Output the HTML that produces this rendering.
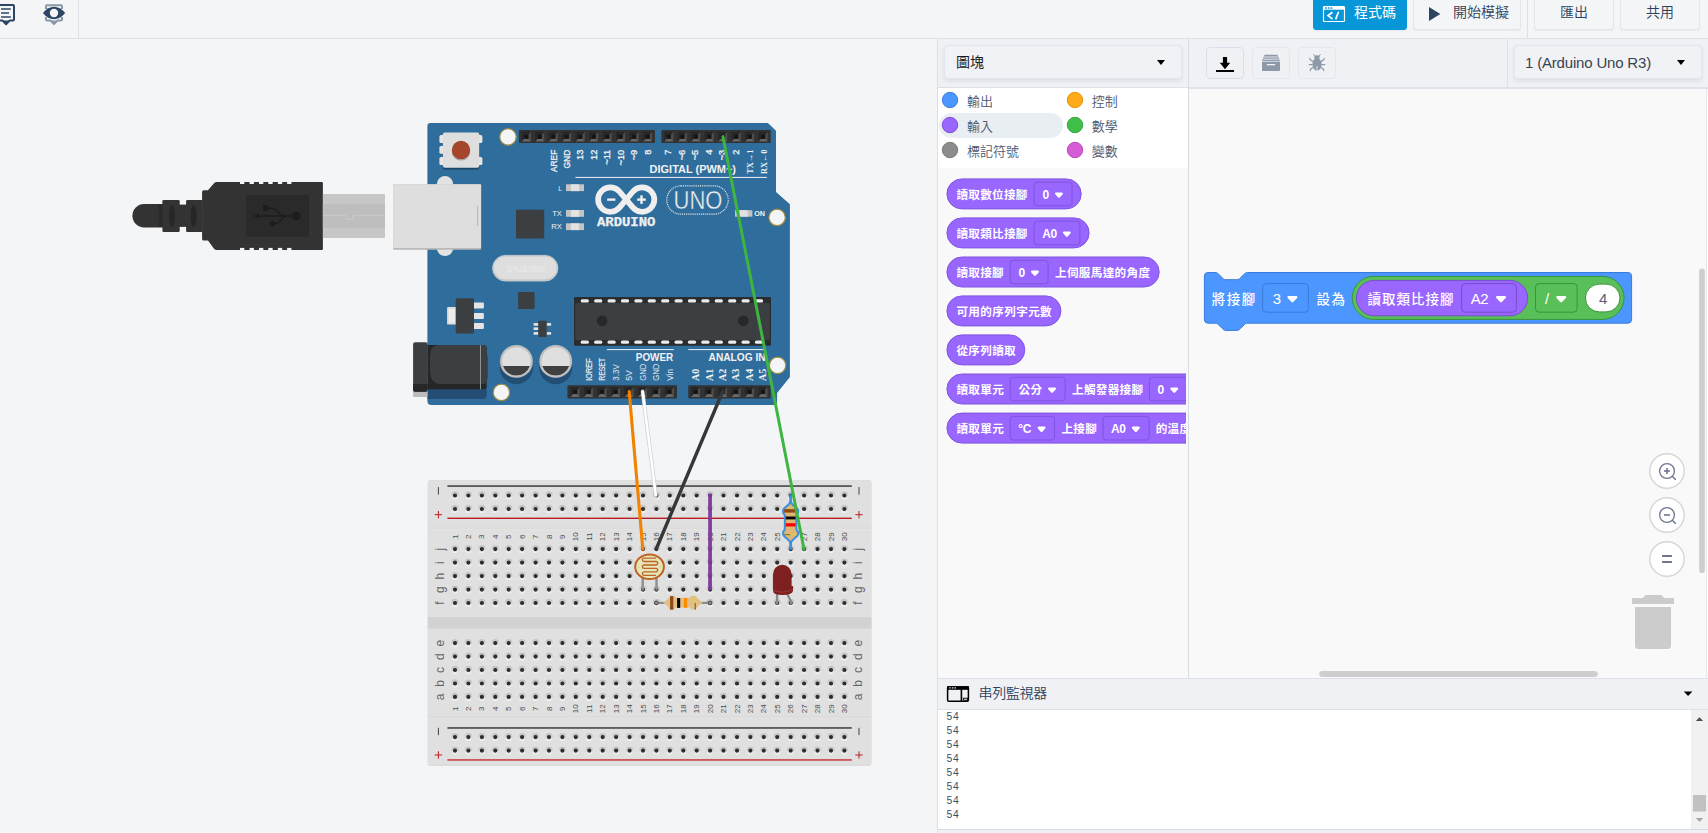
<!DOCTYPE html>
<html lang="zh-Hant">
<head>
<meta charset="utf-8">
<title>Tinkercad Circuits</title>
<style>
*{box-sizing:border-box;margin:0;padding:0}
html,body{width:1708px;height:833px;overflow:hidden}
body{position:relative;background:#f4f5f7;font-family:"Liberation Sans","Noto Sans CJK TC",sans-serif;color:#2c4059}
.abs{position:absolute}
#topbar{left:0;top:0;width:1708px;height:39px;border-bottom:1px solid #dde1e8;background:#f4f5f7}
.tbtn{position:absolute;top:-4px;height:34px;border:1px solid #e3e6ec;border-radius:3px;background:#f4f5f7;font-size:14px;font-weight:350;color:#2c4059;text-align:center;line-height:31px;box-shadow:0 1px 1px rgba(160,170,190,.15)}
.vdiv{position:absolute;width:1px;background:#dde1e8}
#codepanel{left:937px;top:39px;width:771px;height:794px;background:#f0f1f4;border-left:1px solid #d9dee8}
.sel{position:absolute;height:34px;border:1px solid #e1e5ed;border-radius:4px;background:#f1f2f5;box-shadow:0 2px 4px rgba(120,135,160,.18);font-size:14px;color:#1e2a3a}
.ibtn{position:absolute;top:47px;width:38px;height:32px;border:1px solid #e4e7ee;border-radius:4px;background:#f0f1f4}
.cat{position:absolute;font-size:12.5px;font-weight:300;color:#4c5a70;height:25px;line-height:25px;white-space:nowrap}
.cat i{position:absolute;left:-24px;top:4.5px;width:16px;height:16px;border-radius:50%;display:block}
.pb{position:absolute;left:9px;height:31px;border:1px solid #774dcb;background:#9966ff;border-radius:16px;color:#fff;font-size:12px;font-weight:500;line-height:29px;white-space:nowrap;padding-left:9px}
.pb .dd{display:inline-block;vertical-align:top;margin:3px 6px 0 6px;height:23px;line-height:21px;border:1px solid #774dcb;border-radius:4px;padding:0 7px;background:#9966ff}
.tri{display:inline-block;width:0;height:0;border-left:4px solid transparent;border-right:4px solid transparent;border-top:5px solid #fff;border-radius:2px;margin-left:5px;vertical-align:middle;position:relative;top:-1px}
.ddarrow{width:0;height:0;border-left:4.5px solid transparent;border-right:4.5px solid transparent;border-top:5px solid #000}
</style>
</head>
<body>
<!-- ============ TOP BAR ============ -->
<div id="topbar" class="abs">

  <svg class="abs" style="left:0;top:0" width="80" height="38" viewBox="0 0 80 38">
    <path d="M-4 5 H13 Q14 5 14 6 V19.6 Q14 20.6 13 20.6 H9.6 L6.1 24.2 L2.6 20.6 H-4" fill="none" stroke="#2c4562" stroke-width="2" stroke-linejoin="round"/>
    <path d="M1 9 H10.8 M1 13 H9 M1 17 H10.8" stroke="#2c4562" stroke-width="1.6" fill="none"/>
    <path d="M2.2 20.6 H10 L6.1 24.6 Z" fill="#2c4562"/><path d="M50.2 20.6 H57.8 L54 24.5 Z" fill="#8b98a9"/>
    <path d="M46 9 V6.2 Q46 5.2 47 5.2 H61 Q62 5.2 62 6.2 V9 M46 17 V19.6 Q46 20.6 47 20.6 H50.6 L54 24 L57.4 20.6 H61 Q62 20.6 62 19.6 V17" fill="none" stroke="#8b98a9" stroke-width="2" stroke-linejoin="round"/>
    <path d="M42.9 13 Q48 6.8 54 6.8 Q60 6.8 65.2 13 Q60 19.2 54 19.2 Q48 19.2 42.9 13 Z" fill="#2c4562"/>
    <circle cx="54" cy="13" r="4.2" fill="#f4f5f7"/>
  </svg>
  <div class="vdiv" style="left:78px;top:0;height:38px"></div>
  <div class="vdiv" style="left:1527px;top:0;height:38px"></div>
  <div class="tbtn" id="b-code" style="left:1313px;width:94px;background:#0796d8;border-color:#0796d8;color:#fff;font-weight:400;text-align:left;padding-left:40px">程式碼</div>
  <div class="tbtn" id="b-sim" style="left:1413px;width:108px;text-align:left;padding-left:39px">開始模擬</div>
  <div class="tbtn" id="b-exp" style="left:1534px;width:80px">匯出</div>
  <div class="tbtn" id="b-share" style="left:1620px;width:80px">共用</div>
  <svg class="abs" style="left:1322px;top:5px" width="24" height="18" viewBox="0 0 24 18">
    <rect x="1.5" y="1.5" width="21" height="15" rx="1" fill="none" stroke="#fff" stroke-width="1.2"/>
    <rect x="1.5" y="1.5" width="21" height="3.2" fill="#fff"/>
    <rect x="3.1" y="2.2" width="1.8" height="1.6" rx="0.4" fill="#0796d8"/><rect x="5.8" y="2.2" width="1.8" height="1.6" rx="0.4" fill="#0796d8"/><rect x="8.5" y="2.2" width="1.8" height="1.6" rx="0.4" fill="#0796d8"/>
    <path d="M10.5 7.2 L6 10.6 L10.5 14 M16.6 6.8 L13.6 14.4" fill="none" stroke="#fff" stroke-width="1.7"/>
  </svg>
  <svg class="abs" style="left:1428px;top:6px" width="14" height="16" viewBox="0 0 14 16">
    <path d="M1 1 L12.3 8 L1 15 Z" fill="#2c4562"/>
  </svg>
</div>

<!-- ============ CANVAS ============ -->
<svg id="circuit" class="abs" style="left:0;top:39px" width="937" height="794" viewBox="0 39 937 794">
<path d="M144.1 204 H163 V227.4 H144.1 A11.7 11.7 0 0 1 144.1 204 Z" fill="#333333"/>
<rect x="162.4" y="200" width="17.3" height="31.9" rx="1.2" fill="#333333"/>
<rect x="179" y="204.6" width="8" height="22.3" fill="#333333"/>
<rect x="186.1" y="200" width="16.5" height="31.9" rx="1.2" fill="#333333"/>
<ellipse cx="171.9" cy="216" rx="3" ry="11.3" fill="#262626"/><ellipse cx="193.6" cy="216" rx="3" ry="11.3" fill="#262626"/>
<path d="M158 205 Q161 216 158 227 H162.4 V205 Z" fill="#2a2a2a"/>
<path d="M203.6 190.3 H208 L214 183.2 Q215.2 181.9 217 181.9 H321.9 Q322.9 181.9 322.9 182.9 V249 Q322.9 250 321.9 250 H217 Q215.2 250 214 248.7 L208 240.4 H203.6 Q202.1 240.4 202.1 238.9 V191.8 Q202.1 190.3 203.6 190.3 Z" fill="#333333"/>
<rect x="240" y="181.4" width="4.3" height="2.6" fill="#f4f5f7"/><rect x="240" y="247.9" width="4.3" height="2.6" fill="#f4f5f7"/>
<rect x="249.6" y="181.4" width="4.3" height="2.6" fill="#f4f5f7"/><rect x="249.6" y="247.9" width="4.3" height="2.6" fill="#f4f5f7"/>
<rect x="259" y="181.4" width="4.3" height="2.6" fill="#f4f5f7"/><rect x="259" y="247.9" width="4.3" height="2.6" fill="#f4f5f7"/>
<rect x="268.3" y="181.4" width="4.3" height="2.6" fill="#f4f5f7"/><rect x="268.3" y="247.9" width="4.3" height="2.6" fill="#f4f5f7"/>
<rect x="277.9" y="181.4" width="4.3" height="2.6" fill="#f4f5f7"/><rect x="277.9" y="247.9" width="4.3" height="2.6" fill="#f4f5f7"/>
<rect x="287.1" y="181.4" width="4.3" height="2.6" fill="#f4f5f7"/><rect x="287.1" y="247.9" width="4.3" height="2.6" fill="#f4f5f7"/>
<rect x="246" y="195" width="63" height="41.7" fill="#2a2a2a"/>
<g fill="none" stroke="#1d1d1d" stroke-width="1.3"><path d="M256 216 H294"/><path d="M284.5 216 C279 216 278 208.2 271.5 208.2 H268"/><path d="M287 216 C282 216 281 223.6 275.5 223.6 H273"/></g>
<circle cx="296.4" cy="216" r="4.3" fill="#1d1d1d"/><circle cx="272.4" cy="223.6" r="2.7" fill="#1d1d1d"/><rect x="263" y="205.2" width="5.4" height="5.4" fill="#1d1d1d"/><path d="M253.3 216 L258.6 213.2 V218.8 Z" fill="#1d1d1d"/>
<path d="M322.9 194 H384 Q385 194 385 195 V236.9 Q385 237.9 384 237.9 H322.9 Z" fill="#c7c7c7"/>
<rect x="322.9" y="204" width="62.1" height="23.9" fill="#bebebe"/>
<path d="M322.9 215.4 H345.7 L346.8 219.3 H352.5 L353.6 215.4 H385" fill="none" stroke="#cbcbcb" stroke-width="1"/>
<path d="M430.4 123.1 H767.9 L776 130.7 V192.1 L789.9 204.3 V377.1 L777.1 392.9 V402.5 Q777.1 405 774.6 405 H431.4 Q427.4 405 427.4 401 V126.1 Q427.4 123.1 430.4 123.1 Z" fill="#2f6d9c"/>
<circle cx="445" cy="184.3" r="8.2" fill="#e3e3e3"/><circle cx="445" cy="247.9" r="8.2" fill="#e3e3e3"/>
<rect x="393.1" y="184.3" width="88" height="65.4" rx="1" fill="#b9b9b9"/>
<rect x="393.1" y="184.3" width="88" height="63.6" rx="1" fill="#dedede"/>
<rect x="477.1" y="205.7" width="1" height="20.3" fill="#b5b5b5"/>
<rect x="442.9" y="134.5" width="36.3" height="35" rx="2" fill="#1f4668"/>
<rect x="439.4" y="135.1" width="5" height="7.9" rx="1.6" fill="#e8e5e2"/>
<rect x="439.4" y="145.9" width="5" height="7.9" rx="1.6" fill="#e8e5e2"/>
<rect x="439.4" y="157.1" width="5" height="7.9" rx="1.6" fill="#e8e5e2"/>
<rect x="477.5" y="135.1" width="4.9" height="7.9" rx="1.6" fill="#e8e5e2"/>
<rect x="477.5" y="157.1" width="4.9" height="7.9" rx="1.6" fill="#e8e5e2"/>
<rect x="442.9" y="132.6" width="36.3" height="35.1" rx="2" fill="#dedede"/>
<circle cx="461" cy="151.4" r="9.2" fill="#a2a2a2"/><circle cx="461" cy="149.9" r="9.2" fill="#a4452c"/>
<circle cx="508" cy="136.9" r="8.25" fill="#f4f5f7" stroke="#9d8b42" stroke-width="1.2"/>
<circle cx="777.1" cy="217.4" r="8.25" fill="#f4f5f7" stroke="#9d8b42" stroke-width="1.2"/>
<circle cx="777.6" cy="365.3" r="8.25" fill="#f4f5f7" stroke="#9d8b42" stroke-width="1.2"/>
<circle cx="501.4" cy="392.4" r="8.25" fill="#f4f5f7" stroke="#9d8b42" stroke-width="1.2"/>
<rect x="519.0" y="130.0" width="136.0" height="13.1" rx="0.8" fill="#323232"/>
<path d="M521.80 131.80h9.20v9.80h-9.20zM535.26 131.80h9.20v9.80h-9.20zM548.73 131.80h9.20v9.80h-9.20zM562.19 131.80h9.20v9.80h-9.20zM575.66 131.80h9.20v9.80h-9.20zM589.12 131.80h9.20v9.80h-9.20zM602.59 131.80h9.20v9.80h-9.20zM616.05 131.80h9.20v9.80h-9.20zM629.52 131.80h9.20v9.80h-9.20zM642.99 131.80h9.20v9.80h-9.20z" fill="#272727"/>
<path d="M531.00 131.80L531.00 141.60L528.40 138.70L528.40 134.70zM544.47 131.80L544.47 141.60L541.87 138.70L541.87 134.70zM557.93 131.80L557.93 141.60L555.33 138.70L555.33 134.70zM571.39 131.80L571.39 141.60L568.79 138.70L568.79 134.70zM584.86 131.80L584.86 141.60L582.26 138.70L582.26 134.70zM598.33 131.80L598.33 141.60L595.73 138.70L595.73 134.70zM611.79 131.80L611.79 141.60L609.19 138.70L609.19 134.70zM625.25 131.80L625.25 141.60L622.65 138.70L622.65 134.70zM638.72 131.80L638.72 141.60L636.12 138.70L636.12 134.70zM652.19 131.80L652.19 141.60L649.59 138.70L649.59 134.70z" fill="#4e4e4e"/>
<path d="M521.80 141.60L531.00 141.60L528.40 138.70L524.40 138.70zM535.26 141.60L544.47 141.60L541.87 138.70L537.87 138.70zM548.73 141.60L557.93 141.60L555.33 138.70L551.33 138.70zM562.19 141.60L571.39 141.60L568.79 138.70L564.79 138.70zM575.66 141.60L584.86 141.60L582.26 138.70L578.26 138.70zM589.12 141.60L598.33 141.60L595.73 138.70L591.73 138.70zM602.59 141.60L611.79 141.60L609.19 138.70L605.19 138.70zM616.05 141.60L625.25 141.60L622.65 138.70L618.65 138.70zM629.52 141.60L638.72 141.60L636.12 138.70L632.12 138.70zM642.99 141.60L652.19 141.60L649.59 138.70L645.59 138.70z" fill="#676767"/>
<path d="M524.40 134.70h4.00v4.00h-4.00zM537.87 134.70h4.00v4.00h-4.00zM551.33 134.70h4.00v4.00h-4.00zM564.79 134.70h4.00v4.00h-4.00zM578.26 134.70h4.00v4.00h-4.00zM591.73 134.70h4.00v4.00h-4.00zM605.19 134.70h4.00v4.00h-4.00zM618.65 134.70h4.00v4.00h-4.00zM632.12 134.70h4.00v4.00h-4.00zM645.59 134.70h4.00v4.00h-4.00z" fill="#141414"/>
<rect x="661.4" y="130.0" width="109.3" height="13.1" rx="0.8" fill="#323232"/>
<path d="M664.30 131.80h9.20v9.80h-9.20zM677.76 131.80h9.20v9.80h-9.20zM691.23 131.80h9.20v9.80h-9.20zM704.69 131.80h9.20v9.80h-9.20zM718.16 131.80h9.20v9.80h-9.20zM731.62 131.80h9.20v9.80h-9.20zM745.09 131.80h9.20v9.80h-9.20zM758.55 131.80h9.20v9.80h-9.20z" fill="#272727"/>
<path d="M673.50 131.80L673.50 141.60L670.90 138.70L670.90 134.70zM686.97 131.80L686.97 141.60L684.37 138.70L684.37 134.70zM700.43 131.80L700.43 141.60L697.83 138.70L697.83 134.70zM713.89 131.80L713.89 141.60L711.29 138.70L711.29 134.70zM727.36 131.80L727.36 141.60L724.76 138.70L724.76 134.70zM740.83 131.80L740.83 141.60L738.23 138.70L738.23 134.70zM754.29 131.80L754.29 141.60L751.69 138.70L751.69 134.70zM767.75 131.80L767.75 141.60L765.15 138.70L765.15 134.70z" fill="#4e4e4e"/>
<path d="M664.30 141.60L673.50 141.60L670.90 138.70L666.90 138.70zM677.76 141.60L686.97 141.60L684.37 138.70L680.37 138.70zM691.23 141.60L700.43 141.60L697.83 138.70L693.83 138.70zM704.69 141.60L713.89 141.60L711.29 138.70L707.29 138.70zM718.16 141.60L727.36 141.60L724.76 138.70L720.76 138.70zM731.62 141.60L740.83 141.60L738.23 138.70L734.23 138.70zM745.09 141.60L754.29 141.60L751.69 138.70L747.69 138.70zM758.55 141.60L767.75 141.60L765.15 138.70L761.15 138.70z" fill="#676767"/>
<path d="M666.90 134.70h4.00v4.00h-4.00zM680.37 134.70h4.00v4.00h-4.00zM693.83 134.70h4.00v4.00h-4.00zM707.29 134.70h4.00v4.00h-4.00zM720.76 134.70h4.00v4.00h-4.00zM734.23 134.70h4.00v4.00h-4.00zM747.69 134.70h4.00v4.00h-4.00zM761.15 134.70h4.00v4.00h-4.00z" fill="#141414"/>
<rect x="567.4" y="385.3" width="109.6" height="13.1" rx="0.8" fill="#323232"/>
<path d="M570.60 387.10h9.20v9.80h-9.20zM584.07 387.10h9.20v9.80h-9.20zM597.53 387.10h9.20v9.80h-9.20zM611.00 387.10h9.20v9.80h-9.20zM624.46 387.10h9.20v9.80h-9.20zM637.93 387.10h9.20v9.80h-9.20zM651.39 387.10h9.20v9.80h-9.20zM664.86 387.10h9.20v9.80h-9.20z" fill="#272727"/>
<path d="M579.80 387.10L579.80 396.90L577.20 394.00L577.20 390.00zM593.27 387.10L593.27 396.90L590.67 394.00L590.67 390.00zM606.73 387.10L606.73 396.90L604.13 394.00L604.13 390.00zM620.20 387.10L620.20 396.90L617.60 394.00L617.60 390.00zM633.66 387.10L633.66 396.90L631.06 394.00L631.06 390.00zM647.13 387.10L647.13 396.90L644.53 394.00L644.53 390.00zM660.59 387.10L660.59 396.90L657.99 394.00L657.99 390.00zM674.06 387.10L674.06 396.90L671.46 394.00L671.46 390.00z" fill="#4e4e4e"/>
<path d="M570.60 396.90L579.80 396.90L577.20 394.00L573.20 394.00zM584.07 396.90L593.27 396.90L590.67 394.00L586.67 394.00zM597.53 396.90L606.73 396.90L604.13 394.00L600.13 394.00zM611.00 396.90L620.20 396.90L617.60 394.00L613.60 394.00zM624.46 396.90L633.66 396.90L631.06 394.00L627.06 394.00zM637.93 396.90L647.13 396.90L644.53 394.00L640.53 394.00zM651.39 396.90L660.59 396.90L657.99 394.00L653.99 394.00zM664.86 396.90L674.06 396.90L671.46 394.00L667.46 394.00z" fill="#676767"/>
<path d="M573.20 390.00h4.00v4.00h-4.00zM586.67 390.00h4.00v4.00h-4.00zM600.13 390.00h4.00v4.00h-4.00zM613.60 390.00h4.00v4.00h-4.00zM627.06 390.00h4.00v4.00h-4.00zM640.53 390.00h4.00v4.00h-4.00zM653.99 390.00h4.00v4.00h-4.00zM667.46 390.00h4.00v4.00h-4.00z" fill="#141414"/>
<rect x="688.3" y="385.3" width="82.4" height="13.1" rx="0.8" fill="#323232"/>
<path d="M691.10 387.10h9.20v9.80h-9.20zM704.57 387.10h9.20v9.80h-9.20zM718.03 387.10h9.20v9.80h-9.20zM731.50 387.10h9.20v9.80h-9.20zM744.96 387.10h9.20v9.80h-9.20zM758.43 387.10h9.20v9.80h-9.20z" fill="#272727"/>
<path d="M700.30 387.10L700.30 396.90L697.70 394.00L697.70 390.00zM713.77 387.10L713.77 396.90L711.17 394.00L711.17 390.00zM727.23 387.10L727.23 396.90L724.63 394.00L724.63 390.00zM740.70 387.10L740.70 396.90L738.10 394.00L738.10 390.00zM754.16 387.10L754.16 396.90L751.56 394.00L751.56 390.00zM767.63 387.10L767.63 396.90L765.03 394.00L765.03 390.00z" fill="#4e4e4e"/>
<path d="M691.10 396.90L700.30 396.90L697.70 394.00L693.70 394.00zM704.57 396.90L713.77 396.90L711.17 394.00L707.17 394.00zM718.03 396.90L727.23 396.90L724.63 394.00L720.63 394.00zM731.50 396.90L740.70 396.90L738.10 394.00L734.10 394.00zM744.96 396.90L754.16 396.90L751.56 394.00L747.56 394.00zM758.43 396.90L767.63 396.90L765.03 394.00L761.03 394.00z" fill="#676767"/>
<path d="M693.70 390.00h4.00v4.00h-4.00zM707.17 390.00h4.00v4.00h-4.00zM720.63 390.00h4.00v4.00h-4.00zM734.10 390.00h4.00v4.00h-4.00zM747.56 390.00h4.00v4.00h-4.00zM761.03 390.00h4.00v4.00h-4.00z" fill="#141414"/>
<g font-family="'Liberation Sans',sans-serif">
<text transform="translate(556.5 149.7) rotate(-90)" font-size="9.3" font-weight="400" text-anchor="end" fill="#f2f2f2" stroke="#f2f2f2" stroke-width="0.3" textLength="22.4" lengthAdjust="spacingAndGlyphs">AREF</text>
<text transform="translate(569.7 149.7) rotate(-90)" font-size="9.3" font-weight="400" text-anchor="end" fill="#f2f2f2" stroke="#f2f2f2" stroke-width="0.3" textLength="18.9" lengthAdjust="spacingAndGlyphs">GND</text>
<text transform="translate(583.2 149.7) rotate(-90)" font-size="9.3" font-weight="400" text-anchor="end" fill="#f2f2f2" stroke="#f2f2f2" stroke-width="0.3">13</text>
<text transform="translate(596.7 149.7) rotate(-90)" font-size="9.3" font-weight="400" text-anchor="end" fill="#f2f2f2" stroke="#f2f2f2" stroke-width="0.3">12</text>
<text transform="translate(610.1 149.7) rotate(-90)" font-size="9.3" font-weight="400" text-anchor="end" fill="#f2f2f2" stroke="#f2f2f2" stroke-width="0.3">~11</text>
<text transform="translate(623.6 149.7) rotate(-90)" font-size="9.3" font-weight="400" text-anchor="end" fill="#f2f2f2" stroke="#f2f2f2" stroke-width="0.3">~10</text>
<text transform="translate(637.1 149.7) rotate(-90)" font-size="9.3" font-weight="400" text-anchor="end" fill="#f2f2f2" stroke="#f2f2f2" stroke-width="0.3">~9</text>
<text transform="translate(650.5 149.7) rotate(-90)" font-size="9.3" font-weight="400" text-anchor="end" fill="#f2f2f2" stroke="#f2f2f2" stroke-width="0.3">8</text>
<text transform="translate(671.2 149.7) rotate(-90)" font-size="9.3" font-weight="400" text-anchor="end" fill="#f2f2f2" stroke="#f2f2f2" stroke-width="0.3">7</text>
<text transform="translate(684.7 149.7) rotate(-90)" font-size="9.3" font-weight="400" text-anchor="end" fill="#f2f2f2" stroke="#f2f2f2" stroke-width="0.3">~6</text>
<text transform="translate(698.1 149.7) rotate(-90)" font-size="9.3" font-weight="400" text-anchor="end" fill="#f2f2f2" stroke="#f2f2f2" stroke-width="0.3">~5</text>
<text transform="translate(711.6 149.7) rotate(-90)" font-size="9.3" font-weight="400" text-anchor="end" fill="#f2f2f2" stroke="#f2f2f2" stroke-width="0.3">4</text>
<text transform="translate(725.1 149.7) rotate(-90)" font-size="9.3" font-weight="400" text-anchor="end" fill="#f2f2f2" stroke="#f2f2f2" stroke-width="0.3">~3</text>
<text transform="translate(738.5 149.7) rotate(-90)" font-size="9.3" font-weight="400" text-anchor="end" fill="#f2f2f2" stroke="#f2f2f2" stroke-width="0.3">2</text>
<text transform="translate(753.3 149.5) rotate(-90)" font-size="9.2" font-weight="700" text-anchor="end" fill="#f2f2f2" font-family="'Liberation Serif',serif" textLength="24.4" lengthAdjust="spacingAndGlyphs">TX→1</text>
<text transform="translate(766.8 149.5) rotate(-90)" font-size="9.2" font-weight="700" text-anchor="end" fill="#f2f2f2" font-family="'Liberation Serif',serif" textLength="24.4" lengthAdjust="spacingAndGlyphs">RX←0</text>
<text x="649.6" y="173.2" font-size="10.4" font-weight="700" fill="#f2f2f2" textLength="86.4" lengthAdjust="spacingAndGlyphs">DIGITAL (PWM~)</text>
<rect x="575.4" y="176.9" width="191.5" height="1" fill="#f2f2f2"/>
<rect x="566" y="184.3" width="18" height="6.8" fill="#c4c4c4"/><rect x="570.9" y="184.3" width="8.3" height="6.8" fill="#e2e2e2"/>
<rect x="566" y="210" width="18" height="6.8" fill="#c4c4c4"/><rect x="570.9" y="210" width="8.3" height="6.8" fill="#e2e2e2"/>
<rect x="566" y="223.3" width="18" height="6.8" fill="#c4c4c4"/><rect x="570.9" y="223.3" width="8.3" height="6.8" fill="#e2e2e2"/>
<rect x="735" y="210.2" width="17.4" height="6.5" fill="#c4c4c4"/><rect x="739.7" y="210.2" width="8.0" height="6.5" fill="#e2e2e2"/>
<text x="561.9" y="190.5" font-size="6.6" font-weight="400" fill="#f2f2f2" text-anchor="end">L</text>
<text x="561.9" y="216.2" font-size="7.6" font-weight="400" fill="#f2f2f2" text-anchor="end">TX</text>
<text x="561.9" y="229.3" font-size="7.6" font-weight="400" fill="#f2f2f2" text-anchor="end">RX</text>
<text x="754.2" y="216.2" font-size="7.5" font-weight="700" fill="#f2f2f2" textLength="10.8" lengthAdjust="spacingAndGlyphs">ON</text>
<rect x="516" y="209.7" width="28.2" height="28.9" rx="0.8" fill="#3b3f42"/>
<path d="M619.66 191.78 A12.2 12.2 0 1 0 619.66 207.42 L632.74 191.78 A12.2 12.2 0 1 1 632.74 207.42 Z" fill="none" stroke="#efefef" stroke-width="5.7" stroke-linejoin="round"/>
<rect x="607.2" y="198.4" width="8.2" height="2.4" fill="#efefef"/><rect x="637.2" y="198.4" width="8.6" height="2.4" fill="#efefef"/><rect x="640.3" y="195.3" width="2.4" height="8.6" fill="#efefef"/>
<text x="597" y="226.4" font-size="12.2" font-weight="700" stroke="#efefef" stroke-width="0.25" fill="#efefef" font-family="'Liberation Mono',monospace" textLength="58.4" lengthAdjust="spacingAndGlyphs">ARDUINO</text>
<rect x="666.8" y="185.8" width="61.4" height="28.4" rx="14.2" fill="none" stroke="#efefef" stroke-width="1.2" stroke-dasharray="1 0.9"/>
<text x="698" y="209.2" font-size="25.6" fill="#efefef" stroke="#2f6d9c" stroke-width="0.4" text-anchor="middle" textLength="49" lengthAdjust="spacingAndGlyphs">UNO</text>
<rect x="492.6" y="255.4" width="65.3" height="25.6" rx="12.8" fill="#c2c2c2" stroke="#d6d6d6" stroke-width="0.8"/>
<rect x="493.8" y="256.4" width="62.9" height="23" rx="11.5" fill="#dedede"/>
<text x="525.6" y="271.8" font-size="9.6" fill="#ececec" text-anchor="middle" textLength="39.2" lengthAdjust="spacingAndGlyphs">SPK16.000G</text>
<rect x="518.1" y="292.1" width="16.5" height="16.9" rx="0.6" fill="#3b3f42"/>
<rect x="447.1" y="307.1" width="9.5" height="17.5" rx="1.2" fill="#e0e0e0"/><rect x="449" y="309" width="6" height="13.6" fill="#ededed"/>
<rect x="473" y="302.6" width="10.9" height="6" rx="0.8" fill="#e4e4e4"/>
<rect x="473" y="312.9" width="10.9" height="6" rx="0.8" fill="#e4e4e4"/>
<rect x="473" y="322.9" width="10.9" height="6" rx="0.8" fill="#e4e4e4"/>
<rect x="455.7" y="298.3" width="18.3" height="35.3" rx="1" fill="#3b3f42"/>
<rect x="533.6" y="323.1" width="5" height="2.6" fill="#e4e4e4"/>
<rect x="533.6" y="327.4" width="5" height="2.6" fill="#e4e4e4"/>
<rect x="533.6" y="332.1" width="5" height="2.6" fill="#e4e4e4"/>
<rect x="546.4" y="323.1" width="4.7" height="2.6" fill="#e4e4e4"/>
<rect x="546.4" y="332.1" width="4.7" height="2.6" fill="#e4e4e4"/>
<rect x="538.3" y="320.7" width="8.4" height="16.2" rx="0.6" fill="#3b3f42"/>
<rect x="574" y="297.1" width="197" height="48.6" rx="1.4" fill="#2a2c2e"/>
<rect x="575.2" y="302.9" width="194.6" height="37.2" rx="1.6" fill="#3b3f42"/>
<rect x="580.7" y="299.2" width="8.2" height="3.2" rx="1.5" fill="#ebebeb"/><rect x="580.7" y="340.6" width="8.2" height="3.2" rx="1.5" fill="#ebebeb"/>
<rect x="594.1" y="299.2" width="8.2" height="3.2" rx="1.5" fill="#ebebeb"/><rect x="594.1" y="340.6" width="8.2" height="3.2" rx="1.5" fill="#ebebeb"/>
<rect x="607.5" y="299.2" width="8.2" height="3.2" rx="1.5" fill="#ebebeb"/><rect x="607.5" y="340.6" width="8.2" height="3.2" rx="1.5" fill="#ebebeb"/>
<rect x="620.9" y="299.2" width="8.2" height="3.2" rx="1.5" fill="#ebebeb"/><rect x="620.9" y="340.6" width="8.2" height="3.2" rx="1.5" fill="#ebebeb"/>
<rect x="634.3" y="299.2" width="8.2" height="3.2" rx="1.5" fill="#ebebeb"/><rect x="634.3" y="340.6" width="8.2" height="3.2" rx="1.5" fill="#ebebeb"/>
<rect x="647.7" y="299.2" width="8.2" height="3.2" rx="1.5" fill="#ebebeb"/><rect x="647.7" y="340.6" width="8.2" height="3.2" rx="1.5" fill="#ebebeb"/>
<rect x="661.1" y="299.2" width="8.2" height="3.2" rx="1.5" fill="#ebebeb"/><rect x="661.1" y="340.6" width="8.2" height="3.2" rx="1.5" fill="#ebebeb"/>
<rect x="674.5" y="299.2" width="8.2" height="3.2" rx="1.5" fill="#ebebeb"/><rect x="674.5" y="340.6" width="8.2" height="3.2" rx="1.5" fill="#ebebeb"/>
<rect x="687.9" y="299.2" width="8.2" height="3.2" rx="1.5" fill="#ebebeb"/><rect x="687.9" y="340.6" width="8.2" height="3.2" rx="1.5" fill="#ebebeb"/>
<rect x="701.3" y="299.2" width="8.2" height="3.2" rx="1.5" fill="#ebebeb"/><rect x="701.3" y="340.6" width="8.2" height="3.2" rx="1.5" fill="#ebebeb"/>
<rect x="714.7" y="299.2" width="8.2" height="3.2" rx="1.5" fill="#ebebeb"/><rect x="714.7" y="340.6" width="8.2" height="3.2" rx="1.5" fill="#ebebeb"/>
<rect x="728.1" y="299.2" width="8.2" height="3.2" rx="1.5" fill="#ebebeb"/><rect x="728.1" y="340.6" width="8.2" height="3.2" rx="1.5" fill="#ebebeb"/>
<rect x="741.5" y="299.2" width="8.2" height="3.2" rx="1.5" fill="#ebebeb"/><rect x="741.5" y="340.6" width="8.2" height="3.2" rx="1.5" fill="#ebebeb"/>
<rect x="754.9" y="299.2" width="8.2" height="3.2" rx="1.5" fill="#ebebeb"/><rect x="754.9" y="340.6" width="8.2" height="3.2" rx="1.5" fill="#ebebeb"/>
<circle cx="602.1" cy="320.7" r="5.3" fill="#26282a"/><circle cx="743.3" cy="320.7" r="5.3" fill="#26282a"/>
<rect x="606.9" y="349.1" width="67" height="1" fill="#f2f2f2"/><rect x="688.3" y="349.1" width="76.5" height="1" fill="#f2f2f2"/>
<text x="673.2" y="360.6" font-size="10.6" font-weight="700" fill="#f2f2f2" text-anchor="end" textLength="37.4" lengthAdjust="spacingAndGlyphs">POWER</text>
<text x="708.6" y="360.6" font-size="10.6" font-weight="700" fill="#f2f2f2" textLength="57" lengthAdjust="spacingAndGlyphs">ANALOG IN</text>
<text transform="translate(591.8 380.7) rotate(-90)" font-size="8.6" font-weight="400" text-anchor="start" fill="#f2f2f2" stroke="#f2f2f2" stroke-width="0.15" textLength="22.3" lengthAdjust="spacingAndGlyphs">IOREF</text>
<text transform="translate(605.3 380.7) rotate(-90)" font-size="8.6" font-weight="400" text-anchor="start" fill="#f2f2f2" stroke="#f2f2f2" stroke-width="0.15" textLength="22.6" lengthAdjust="spacingAndGlyphs">RESET</text>
<text transform="translate(618.7 380.7) rotate(-90)" font-size="8.6" font-weight="400" text-anchor="start" fill="#e4e9ee" textLength="16.4" lengthAdjust="spacingAndGlyphs">3.3V</text>
<text transform="translate(632.2 380.7) rotate(-90)" font-size="8.6" font-weight="400" text-anchor="start" fill="#e4e9ee">5V</text>
<text transform="translate(645.7 380.7) rotate(-90)" font-size="8.6" font-weight="400" text-anchor="start" fill="#e4e9ee" textLength="17.0" lengthAdjust="spacingAndGlyphs">GND</text>
<text transform="translate(659.1 380.7) rotate(-90)" font-size="8.6" font-weight="400" text-anchor="start" fill="#e4e9ee" textLength="17.0" lengthAdjust="spacingAndGlyphs">GND</text>
<text transform="translate(672.6 380.7) rotate(-90)" font-size="8.6" font-weight="400" text-anchor="start" fill="#e4e9ee" textLength="11.8" lengthAdjust="spacingAndGlyphs">Vin</text>
<text transform="translate(699.0 381.0) rotate(-90)" font-size="9.6" font-weight="700" text-anchor="start" fill="#f2f2f2" font-family="'Liberation Serif',serif" textLength="12.2" lengthAdjust="spacingAndGlyphs">A0</text>
<text transform="translate(712.5 381.0) rotate(-90)" font-size="9.6" font-weight="700" text-anchor="start" fill="#f2f2f2" font-family="'Liberation Serif',serif" textLength="12.2" lengthAdjust="spacingAndGlyphs">A1</text>
<text transform="translate(725.9 381.0) rotate(-90)" font-size="9.6" font-weight="700" text-anchor="start" fill="#f2f2f2" font-family="'Liberation Serif',serif" textLength="12.2" lengthAdjust="spacingAndGlyphs">A2</text>
<text transform="translate(739.4 381.0) rotate(-90)" font-size="9.6" font-weight="700" text-anchor="start" fill="#f2f2f2" font-family="'Liberation Serif',serif" textLength="12.2" lengthAdjust="spacingAndGlyphs">A3</text>
<text transform="translate(752.9 381.0) rotate(-90)" font-size="9.6" font-weight="700" text-anchor="start" fill="#f2f2f2" font-family="'Liberation Serif',serif" textLength="12.2" lengthAdjust="spacingAndGlyphs">A4</text>
<text transform="translate(766.3 381.0) rotate(-90)" font-size="9.6" font-weight="700" text-anchor="start" fill="#f2f2f2" font-family="'Liberation Serif',serif" textLength="12.2" lengthAdjust="spacingAndGlyphs">A5</text>
</g>
<circle cx="516.4" cy="367.6" r="16.6" fill="#234f75"/>
<circle cx="516.4" cy="361.4" r="16.4" fill="#c1c1c1"/><circle cx="516.4" cy="361.4" r="14.2" fill="#dfdfdf"/>
<path d="M502.97 366 A14.2 14.2 0 0 0 529.83 366 Z" fill="#404040"/>
<circle cx="555.7" cy="367.6" r="16.6" fill="#234f75"/>
<circle cx="555.7" cy="361.4" r="16.4" fill="#c1c1c1"/><circle cx="555.7" cy="361.4" r="14.2" fill="#dfdfdf"/>
<path d="M542.27 366 A14.2 14.2 0 0 0 569.13 366 Z" fill="#404040"/>
<path d="M427.5 386 H486.7 V395 Q486.7 399 482.7 399 H427.5 Z" fill="#234d72"/>
<rect x="413.1" y="388" width="14.4" height="9.1" rx="1.2" fill="#bcbcbc"/>
<rect x="413.1" y="342.2" width="14.5" height="49.5" rx="2" fill="#3b3f42"/>
<path d="M413.1 384.1 H427.6 V389.7 Q427.6 391.7 425.6 391.7 H415.1 Q413.1 391.7 413.1 389.7 Z" fill="#26282a"/>
<path d="M427.5 345.1 H483.2 Q486.7 345.1 486.7 348.6 V385.8 Q486.7 389.3 483.2 389.3 H427.5 Z" fill="#242628"/>
<path d="M439 345.1 H483.2 Q486.7 345.1 486.7 348.6 V380.5 Q486.7 384 483.2 384 H441 Q430 384 430 370 V356 Q430 345.1 439 345.1 Z" fill="#3b3f42"/>
<rect x="486.2" y="355.3" width="1.6" height="23.4" rx="0.6" fill="#3b3f42"/>
<rect x="480" y="345.1" width="0.9" height="44.2" fill="#9a9c9e"/>
<rect x="427.8" y="480.3" width="443.6" height="285.4" rx="2.2" fill="#d3d3d3"/>
<rect x="427.8" y="480.3" width="443.6" height="284.5" rx="2.2" fill="#e0e0e0"/>
<rect x="427.8" y="527.7" width="443.6" height="1" fill="#d6d6d6"/><rect x="427.8" y="528.7" width="443.6" height="1" fill="#e4e4e4"/>
<rect x="427.8" y="716.6" width="443.6" height="1" fill="#d6d6d6"/><rect x="427.8" y="717.6" width="443.6" height="1" fill="#e4e4e4"/>
<rect x="427.8" y="617.2" width="443.6" height="11.3" fill="#d2d2d2"/>
<rect x="447.4" y="485.3" width="404.4" height="1.5" fill="#3c3c3c"/><rect x="447.4" y="517.6" width="404.4" height="1.4" fill="#bb1e22"/>
<rect x="447.4" y="727.2" width="404.4" height="1.5" fill="#3c3c3c"/><rect x="447.4" y="759.2" width="404.4" height="1.5" fill="#c8393f"/>
<linearGradient id="hg" x1="0" y1="0" x2="0" y2="1"><stop offset="0" stop-color="#bdbdbd"/><stop offset="0.45" stop-color="#d2d2d2"/><stop offset="1" stop-color="#f4f4f4"/></linearGradient>
<path d="M451.1 495.5a3.9 3.9 0 1 0 7.8 0a3.9 3.9 0 1 0 -7.8 0M464.5 495.5a3.9 3.9 0 1 0 7.8 0a3.9 3.9 0 1 0 -7.8 0M478.0 495.5a3.9 3.9 0 1 0 7.8 0a3.9 3.9 0 1 0 -7.8 0M491.4 495.5a3.9 3.9 0 1 0 7.8 0a3.9 3.9 0 1 0 -7.8 0M504.8 495.5a3.9 3.9 0 1 0 7.8 0a3.9 3.9 0 1 0 -7.8 0M518.2 495.5a3.9 3.9 0 1 0 7.8 0a3.9 3.9 0 1 0 -7.8 0M531.7 495.5a3.9 3.9 0 1 0 7.8 0a3.9 3.9 0 1 0 -7.8 0M545.1 495.5a3.9 3.9 0 1 0 7.8 0a3.9 3.9 0 1 0 -7.8 0M558.5 495.5a3.9 3.9 0 1 0 7.8 0a3.9 3.9 0 1 0 -7.8 0M571.9 495.5a3.9 3.9 0 1 0 7.8 0a3.9 3.9 0 1 0 -7.8 0M585.4 495.5a3.9 3.9 0 1 0 7.8 0a3.9 3.9 0 1 0 -7.8 0M598.8 495.5a3.9 3.9 0 1 0 7.8 0a3.9 3.9 0 1 0 -7.8 0M612.2 495.5a3.9 3.9 0 1 0 7.8 0a3.9 3.9 0 1 0 -7.8 0M625.7 495.5a3.9 3.9 0 1 0 7.8 0a3.9 3.9 0 1 0 -7.8 0M639.1 495.5a3.9 3.9 0 1 0 7.8 0a3.9 3.9 0 1 0 -7.8 0M652.5 495.5a3.9 3.9 0 1 0 7.8 0a3.9 3.9 0 1 0 -7.8 0M665.9 495.5a3.9 3.9 0 1 0 7.8 0a3.9 3.9 0 1 0 -7.8 0M679.4 495.5a3.9 3.9 0 1 0 7.8 0a3.9 3.9 0 1 0 -7.8 0M692.8 495.5a3.9 3.9 0 1 0 7.8 0a3.9 3.9 0 1 0 -7.8 0M706.2 495.5a3.9 3.9 0 1 0 7.8 0a3.9 3.9 0 1 0 -7.8 0M719.6 495.5a3.9 3.9 0 1 0 7.8 0a3.9 3.9 0 1 0 -7.8 0M733.1 495.5a3.9 3.9 0 1 0 7.8 0a3.9 3.9 0 1 0 -7.8 0M746.5 495.5a3.9 3.9 0 1 0 7.8 0a3.9 3.9 0 1 0 -7.8 0M759.9 495.5a3.9 3.9 0 1 0 7.8 0a3.9 3.9 0 1 0 -7.8 0M773.3 495.5a3.9 3.9 0 1 0 7.8 0a3.9 3.9 0 1 0 -7.8 0M786.8 495.5a3.9 3.9 0 1 0 7.8 0a3.9 3.9 0 1 0 -7.8 0M800.2 495.5a3.9 3.9 0 1 0 7.8 0a3.9 3.9 0 1 0 -7.8 0M813.6 495.5a3.9 3.9 0 1 0 7.8 0a3.9 3.9 0 1 0 -7.8 0M827.1 495.5a3.9 3.9 0 1 0 7.8 0a3.9 3.9 0 1 0 -7.8 0M840.5 495.5a3.9 3.9 0 1 0 7.8 0a3.9 3.9 0 1 0 -7.8 0" fill="url(#hg)"/>
<path d="M451.1 509.0a3.9 3.9 0 1 0 7.8 0a3.9 3.9 0 1 0 -7.8 0M464.5 509.0a3.9 3.9 0 1 0 7.8 0a3.9 3.9 0 1 0 -7.8 0M478.0 509.0a3.9 3.9 0 1 0 7.8 0a3.9 3.9 0 1 0 -7.8 0M491.4 509.0a3.9 3.9 0 1 0 7.8 0a3.9 3.9 0 1 0 -7.8 0M504.8 509.0a3.9 3.9 0 1 0 7.8 0a3.9 3.9 0 1 0 -7.8 0M518.2 509.0a3.9 3.9 0 1 0 7.8 0a3.9 3.9 0 1 0 -7.8 0M531.7 509.0a3.9 3.9 0 1 0 7.8 0a3.9 3.9 0 1 0 -7.8 0M545.1 509.0a3.9 3.9 0 1 0 7.8 0a3.9 3.9 0 1 0 -7.8 0M558.5 509.0a3.9 3.9 0 1 0 7.8 0a3.9 3.9 0 1 0 -7.8 0M571.9 509.0a3.9 3.9 0 1 0 7.8 0a3.9 3.9 0 1 0 -7.8 0M585.4 509.0a3.9 3.9 0 1 0 7.8 0a3.9 3.9 0 1 0 -7.8 0M598.8 509.0a3.9 3.9 0 1 0 7.8 0a3.9 3.9 0 1 0 -7.8 0M612.2 509.0a3.9 3.9 0 1 0 7.8 0a3.9 3.9 0 1 0 -7.8 0M625.7 509.0a3.9 3.9 0 1 0 7.8 0a3.9 3.9 0 1 0 -7.8 0M639.1 509.0a3.9 3.9 0 1 0 7.8 0a3.9 3.9 0 1 0 -7.8 0M652.5 509.0a3.9 3.9 0 1 0 7.8 0a3.9 3.9 0 1 0 -7.8 0M665.9 509.0a3.9 3.9 0 1 0 7.8 0a3.9 3.9 0 1 0 -7.8 0M679.4 509.0a3.9 3.9 0 1 0 7.8 0a3.9 3.9 0 1 0 -7.8 0M692.8 509.0a3.9 3.9 0 1 0 7.8 0a3.9 3.9 0 1 0 -7.8 0M706.2 509.0a3.9 3.9 0 1 0 7.8 0a3.9 3.9 0 1 0 -7.8 0M719.6 509.0a3.9 3.9 0 1 0 7.8 0a3.9 3.9 0 1 0 -7.8 0M733.1 509.0a3.9 3.9 0 1 0 7.8 0a3.9 3.9 0 1 0 -7.8 0M746.5 509.0a3.9 3.9 0 1 0 7.8 0a3.9 3.9 0 1 0 -7.8 0M759.9 509.0a3.9 3.9 0 1 0 7.8 0a3.9 3.9 0 1 0 -7.8 0M773.3 509.0a3.9 3.9 0 1 0 7.8 0a3.9 3.9 0 1 0 -7.8 0M786.8 509.0a3.9 3.9 0 1 0 7.8 0a3.9 3.9 0 1 0 -7.8 0M800.2 509.0a3.9 3.9 0 1 0 7.8 0a3.9 3.9 0 1 0 -7.8 0M813.6 509.0a3.9 3.9 0 1 0 7.8 0a3.9 3.9 0 1 0 -7.8 0M827.1 509.0a3.9 3.9 0 1 0 7.8 0a3.9 3.9 0 1 0 -7.8 0M840.5 509.0a3.9 3.9 0 1 0 7.8 0a3.9 3.9 0 1 0 -7.8 0" fill="url(#hg)"/>
<path d="M451.1 549.1a3.9 3.9 0 1 0 7.8 0a3.9 3.9 0 1 0 -7.8 0M464.5 549.1a3.9 3.9 0 1 0 7.8 0a3.9 3.9 0 1 0 -7.8 0M478.0 549.1a3.9 3.9 0 1 0 7.8 0a3.9 3.9 0 1 0 -7.8 0M491.4 549.1a3.9 3.9 0 1 0 7.8 0a3.9 3.9 0 1 0 -7.8 0M504.8 549.1a3.9 3.9 0 1 0 7.8 0a3.9 3.9 0 1 0 -7.8 0M518.2 549.1a3.9 3.9 0 1 0 7.8 0a3.9 3.9 0 1 0 -7.8 0M531.7 549.1a3.9 3.9 0 1 0 7.8 0a3.9 3.9 0 1 0 -7.8 0M545.1 549.1a3.9 3.9 0 1 0 7.8 0a3.9 3.9 0 1 0 -7.8 0M558.5 549.1a3.9 3.9 0 1 0 7.8 0a3.9 3.9 0 1 0 -7.8 0M571.9 549.1a3.9 3.9 0 1 0 7.8 0a3.9 3.9 0 1 0 -7.8 0M585.4 549.1a3.9 3.9 0 1 0 7.8 0a3.9 3.9 0 1 0 -7.8 0M598.8 549.1a3.9 3.9 0 1 0 7.8 0a3.9 3.9 0 1 0 -7.8 0M612.2 549.1a3.9 3.9 0 1 0 7.8 0a3.9 3.9 0 1 0 -7.8 0M625.7 549.1a3.9 3.9 0 1 0 7.8 0a3.9 3.9 0 1 0 -7.8 0M639.1 549.1a3.9 3.9 0 1 0 7.8 0a3.9 3.9 0 1 0 -7.8 0M652.5 549.1a3.9 3.9 0 1 0 7.8 0a3.9 3.9 0 1 0 -7.8 0M665.9 549.1a3.9 3.9 0 1 0 7.8 0a3.9 3.9 0 1 0 -7.8 0M679.4 549.1a3.9 3.9 0 1 0 7.8 0a3.9 3.9 0 1 0 -7.8 0M692.8 549.1a3.9 3.9 0 1 0 7.8 0a3.9 3.9 0 1 0 -7.8 0M706.2 549.1a3.9 3.9 0 1 0 7.8 0a3.9 3.9 0 1 0 -7.8 0M719.6 549.1a3.9 3.9 0 1 0 7.8 0a3.9 3.9 0 1 0 -7.8 0M733.1 549.1a3.9 3.9 0 1 0 7.8 0a3.9 3.9 0 1 0 -7.8 0M746.5 549.1a3.9 3.9 0 1 0 7.8 0a3.9 3.9 0 1 0 -7.8 0M759.9 549.1a3.9 3.9 0 1 0 7.8 0a3.9 3.9 0 1 0 -7.8 0M773.3 549.1a3.9 3.9 0 1 0 7.8 0a3.9 3.9 0 1 0 -7.8 0M786.8 549.1a3.9 3.9 0 1 0 7.8 0a3.9 3.9 0 1 0 -7.8 0M800.2 549.1a3.9 3.9 0 1 0 7.8 0a3.9 3.9 0 1 0 -7.8 0M813.6 549.1a3.9 3.9 0 1 0 7.8 0a3.9 3.9 0 1 0 -7.8 0M827.1 549.1a3.9 3.9 0 1 0 7.8 0a3.9 3.9 0 1 0 -7.8 0M840.5 549.1a3.9 3.9 0 1 0 7.8 0a3.9 3.9 0 1 0 -7.8 0" fill="url(#hg)"/>
<path d="M451.1 562.6a3.9 3.9 0 1 0 7.8 0a3.9 3.9 0 1 0 -7.8 0M464.5 562.6a3.9 3.9 0 1 0 7.8 0a3.9 3.9 0 1 0 -7.8 0M478.0 562.6a3.9 3.9 0 1 0 7.8 0a3.9 3.9 0 1 0 -7.8 0M491.4 562.6a3.9 3.9 0 1 0 7.8 0a3.9 3.9 0 1 0 -7.8 0M504.8 562.6a3.9 3.9 0 1 0 7.8 0a3.9 3.9 0 1 0 -7.8 0M518.2 562.6a3.9 3.9 0 1 0 7.8 0a3.9 3.9 0 1 0 -7.8 0M531.7 562.6a3.9 3.9 0 1 0 7.8 0a3.9 3.9 0 1 0 -7.8 0M545.1 562.6a3.9 3.9 0 1 0 7.8 0a3.9 3.9 0 1 0 -7.8 0M558.5 562.6a3.9 3.9 0 1 0 7.8 0a3.9 3.9 0 1 0 -7.8 0M571.9 562.6a3.9 3.9 0 1 0 7.8 0a3.9 3.9 0 1 0 -7.8 0M585.4 562.6a3.9 3.9 0 1 0 7.8 0a3.9 3.9 0 1 0 -7.8 0M598.8 562.6a3.9 3.9 0 1 0 7.8 0a3.9 3.9 0 1 0 -7.8 0M612.2 562.6a3.9 3.9 0 1 0 7.8 0a3.9 3.9 0 1 0 -7.8 0M625.7 562.6a3.9 3.9 0 1 0 7.8 0a3.9 3.9 0 1 0 -7.8 0M639.1 562.6a3.9 3.9 0 1 0 7.8 0a3.9 3.9 0 1 0 -7.8 0M652.5 562.6a3.9 3.9 0 1 0 7.8 0a3.9 3.9 0 1 0 -7.8 0M665.9 562.6a3.9 3.9 0 1 0 7.8 0a3.9 3.9 0 1 0 -7.8 0M679.4 562.6a3.9 3.9 0 1 0 7.8 0a3.9 3.9 0 1 0 -7.8 0M692.8 562.6a3.9 3.9 0 1 0 7.8 0a3.9 3.9 0 1 0 -7.8 0M706.2 562.6a3.9 3.9 0 1 0 7.8 0a3.9 3.9 0 1 0 -7.8 0M719.6 562.6a3.9 3.9 0 1 0 7.8 0a3.9 3.9 0 1 0 -7.8 0M733.1 562.6a3.9 3.9 0 1 0 7.8 0a3.9 3.9 0 1 0 -7.8 0M746.5 562.6a3.9 3.9 0 1 0 7.8 0a3.9 3.9 0 1 0 -7.8 0M759.9 562.6a3.9 3.9 0 1 0 7.8 0a3.9 3.9 0 1 0 -7.8 0M773.3 562.6a3.9 3.9 0 1 0 7.8 0a3.9 3.9 0 1 0 -7.8 0M786.8 562.6a3.9 3.9 0 1 0 7.8 0a3.9 3.9 0 1 0 -7.8 0M800.2 562.6a3.9 3.9 0 1 0 7.8 0a3.9 3.9 0 1 0 -7.8 0M813.6 562.6a3.9 3.9 0 1 0 7.8 0a3.9 3.9 0 1 0 -7.8 0M827.1 562.6a3.9 3.9 0 1 0 7.8 0a3.9 3.9 0 1 0 -7.8 0M840.5 562.6a3.9 3.9 0 1 0 7.8 0a3.9 3.9 0 1 0 -7.8 0" fill="url(#hg)"/>
<path d="M451.1 576.1a3.9 3.9 0 1 0 7.8 0a3.9 3.9 0 1 0 -7.8 0M464.5 576.1a3.9 3.9 0 1 0 7.8 0a3.9 3.9 0 1 0 -7.8 0M478.0 576.1a3.9 3.9 0 1 0 7.8 0a3.9 3.9 0 1 0 -7.8 0M491.4 576.1a3.9 3.9 0 1 0 7.8 0a3.9 3.9 0 1 0 -7.8 0M504.8 576.1a3.9 3.9 0 1 0 7.8 0a3.9 3.9 0 1 0 -7.8 0M518.2 576.1a3.9 3.9 0 1 0 7.8 0a3.9 3.9 0 1 0 -7.8 0M531.7 576.1a3.9 3.9 0 1 0 7.8 0a3.9 3.9 0 1 0 -7.8 0M545.1 576.1a3.9 3.9 0 1 0 7.8 0a3.9 3.9 0 1 0 -7.8 0M558.5 576.1a3.9 3.9 0 1 0 7.8 0a3.9 3.9 0 1 0 -7.8 0M571.9 576.1a3.9 3.9 0 1 0 7.8 0a3.9 3.9 0 1 0 -7.8 0M585.4 576.1a3.9 3.9 0 1 0 7.8 0a3.9 3.9 0 1 0 -7.8 0M598.8 576.1a3.9 3.9 0 1 0 7.8 0a3.9 3.9 0 1 0 -7.8 0M612.2 576.1a3.9 3.9 0 1 0 7.8 0a3.9 3.9 0 1 0 -7.8 0M625.7 576.1a3.9 3.9 0 1 0 7.8 0a3.9 3.9 0 1 0 -7.8 0M639.1 576.1a3.9 3.9 0 1 0 7.8 0a3.9 3.9 0 1 0 -7.8 0M652.5 576.1a3.9 3.9 0 1 0 7.8 0a3.9 3.9 0 1 0 -7.8 0M665.9 576.1a3.9 3.9 0 1 0 7.8 0a3.9 3.9 0 1 0 -7.8 0M679.4 576.1a3.9 3.9 0 1 0 7.8 0a3.9 3.9 0 1 0 -7.8 0M692.8 576.1a3.9 3.9 0 1 0 7.8 0a3.9 3.9 0 1 0 -7.8 0M706.2 576.1a3.9 3.9 0 1 0 7.8 0a3.9 3.9 0 1 0 -7.8 0M719.6 576.1a3.9 3.9 0 1 0 7.8 0a3.9 3.9 0 1 0 -7.8 0M733.1 576.1a3.9 3.9 0 1 0 7.8 0a3.9 3.9 0 1 0 -7.8 0M746.5 576.1a3.9 3.9 0 1 0 7.8 0a3.9 3.9 0 1 0 -7.8 0M759.9 576.1a3.9 3.9 0 1 0 7.8 0a3.9 3.9 0 1 0 -7.8 0M773.3 576.1a3.9 3.9 0 1 0 7.8 0a3.9 3.9 0 1 0 -7.8 0M786.8 576.1a3.9 3.9 0 1 0 7.8 0a3.9 3.9 0 1 0 -7.8 0M800.2 576.1a3.9 3.9 0 1 0 7.8 0a3.9 3.9 0 1 0 -7.8 0M813.6 576.1a3.9 3.9 0 1 0 7.8 0a3.9 3.9 0 1 0 -7.8 0M827.1 576.1a3.9 3.9 0 1 0 7.8 0a3.9 3.9 0 1 0 -7.8 0M840.5 576.1a3.9 3.9 0 1 0 7.8 0a3.9 3.9 0 1 0 -7.8 0" fill="url(#hg)"/>
<path d="M451.1 589.6a3.9 3.9 0 1 0 7.8 0a3.9 3.9 0 1 0 -7.8 0M464.5 589.6a3.9 3.9 0 1 0 7.8 0a3.9 3.9 0 1 0 -7.8 0M478.0 589.6a3.9 3.9 0 1 0 7.8 0a3.9 3.9 0 1 0 -7.8 0M491.4 589.6a3.9 3.9 0 1 0 7.8 0a3.9 3.9 0 1 0 -7.8 0M504.8 589.6a3.9 3.9 0 1 0 7.8 0a3.9 3.9 0 1 0 -7.8 0M518.2 589.6a3.9 3.9 0 1 0 7.8 0a3.9 3.9 0 1 0 -7.8 0M531.7 589.6a3.9 3.9 0 1 0 7.8 0a3.9 3.9 0 1 0 -7.8 0M545.1 589.6a3.9 3.9 0 1 0 7.8 0a3.9 3.9 0 1 0 -7.8 0M558.5 589.6a3.9 3.9 0 1 0 7.8 0a3.9 3.9 0 1 0 -7.8 0M571.9 589.6a3.9 3.9 0 1 0 7.8 0a3.9 3.9 0 1 0 -7.8 0M585.4 589.6a3.9 3.9 0 1 0 7.8 0a3.9 3.9 0 1 0 -7.8 0M598.8 589.6a3.9 3.9 0 1 0 7.8 0a3.9 3.9 0 1 0 -7.8 0M612.2 589.6a3.9 3.9 0 1 0 7.8 0a3.9 3.9 0 1 0 -7.8 0M625.7 589.6a3.9 3.9 0 1 0 7.8 0a3.9 3.9 0 1 0 -7.8 0M639.1 589.6a3.9 3.9 0 1 0 7.8 0a3.9 3.9 0 1 0 -7.8 0M652.5 589.6a3.9 3.9 0 1 0 7.8 0a3.9 3.9 0 1 0 -7.8 0M665.9 589.6a3.9 3.9 0 1 0 7.8 0a3.9 3.9 0 1 0 -7.8 0M679.4 589.6a3.9 3.9 0 1 0 7.8 0a3.9 3.9 0 1 0 -7.8 0M692.8 589.6a3.9 3.9 0 1 0 7.8 0a3.9 3.9 0 1 0 -7.8 0M706.2 589.6a3.9 3.9 0 1 0 7.8 0a3.9 3.9 0 1 0 -7.8 0M719.6 589.6a3.9 3.9 0 1 0 7.8 0a3.9 3.9 0 1 0 -7.8 0M733.1 589.6a3.9 3.9 0 1 0 7.8 0a3.9 3.9 0 1 0 -7.8 0M746.5 589.6a3.9 3.9 0 1 0 7.8 0a3.9 3.9 0 1 0 -7.8 0M759.9 589.6a3.9 3.9 0 1 0 7.8 0a3.9 3.9 0 1 0 -7.8 0M773.3 589.6a3.9 3.9 0 1 0 7.8 0a3.9 3.9 0 1 0 -7.8 0M786.8 589.6a3.9 3.9 0 1 0 7.8 0a3.9 3.9 0 1 0 -7.8 0M800.2 589.6a3.9 3.9 0 1 0 7.8 0a3.9 3.9 0 1 0 -7.8 0M813.6 589.6a3.9 3.9 0 1 0 7.8 0a3.9 3.9 0 1 0 -7.8 0M827.1 589.6a3.9 3.9 0 1 0 7.8 0a3.9 3.9 0 1 0 -7.8 0M840.5 589.6a3.9 3.9 0 1 0 7.8 0a3.9 3.9 0 1 0 -7.8 0" fill="url(#hg)"/>
<path d="M451.1 603.0a3.9 3.9 0 1 0 7.8 0a3.9 3.9 0 1 0 -7.8 0M464.5 603.0a3.9 3.9 0 1 0 7.8 0a3.9 3.9 0 1 0 -7.8 0M478.0 603.0a3.9 3.9 0 1 0 7.8 0a3.9 3.9 0 1 0 -7.8 0M491.4 603.0a3.9 3.9 0 1 0 7.8 0a3.9 3.9 0 1 0 -7.8 0M504.8 603.0a3.9 3.9 0 1 0 7.8 0a3.9 3.9 0 1 0 -7.8 0M518.2 603.0a3.9 3.9 0 1 0 7.8 0a3.9 3.9 0 1 0 -7.8 0M531.7 603.0a3.9 3.9 0 1 0 7.8 0a3.9 3.9 0 1 0 -7.8 0M545.1 603.0a3.9 3.9 0 1 0 7.8 0a3.9 3.9 0 1 0 -7.8 0M558.5 603.0a3.9 3.9 0 1 0 7.8 0a3.9 3.9 0 1 0 -7.8 0M571.9 603.0a3.9 3.9 0 1 0 7.8 0a3.9 3.9 0 1 0 -7.8 0M585.4 603.0a3.9 3.9 0 1 0 7.8 0a3.9 3.9 0 1 0 -7.8 0M598.8 603.0a3.9 3.9 0 1 0 7.8 0a3.9 3.9 0 1 0 -7.8 0M612.2 603.0a3.9 3.9 0 1 0 7.8 0a3.9 3.9 0 1 0 -7.8 0M625.7 603.0a3.9 3.9 0 1 0 7.8 0a3.9 3.9 0 1 0 -7.8 0M639.1 603.0a3.9 3.9 0 1 0 7.8 0a3.9 3.9 0 1 0 -7.8 0M652.5 603.0a3.9 3.9 0 1 0 7.8 0a3.9 3.9 0 1 0 -7.8 0M665.9 603.0a3.9 3.9 0 1 0 7.8 0a3.9 3.9 0 1 0 -7.8 0M679.4 603.0a3.9 3.9 0 1 0 7.8 0a3.9 3.9 0 1 0 -7.8 0M692.8 603.0a3.9 3.9 0 1 0 7.8 0a3.9 3.9 0 1 0 -7.8 0M706.2 603.0a3.9 3.9 0 1 0 7.8 0a3.9 3.9 0 1 0 -7.8 0M719.6 603.0a3.9 3.9 0 1 0 7.8 0a3.9 3.9 0 1 0 -7.8 0M733.1 603.0a3.9 3.9 0 1 0 7.8 0a3.9 3.9 0 1 0 -7.8 0M746.5 603.0a3.9 3.9 0 1 0 7.8 0a3.9 3.9 0 1 0 -7.8 0M759.9 603.0a3.9 3.9 0 1 0 7.8 0a3.9 3.9 0 1 0 -7.8 0M773.3 603.0a3.9 3.9 0 1 0 7.8 0a3.9 3.9 0 1 0 -7.8 0M786.8 603.0a3.9 3.9 0 1 0 7.8 0a3.9 3.9 0 1 0 -7.8 0M800.2 603.0a3.9 3.9 0 1 0 7.8 0a3.9 3.9 0 1 0 -7.8 0M813.6 603.0a3.9 3.9 0 1 0 7.8 0a3.9 3.9 0 1 0 -7.8 0M827.1 603.0a3.9 3.9 0 1 0 7.8 0a3.9 3.9 0 1 0 -7.8 0M840.5 603.0a3.9 3.9 0 1 0 7.8 0a3.9 3.9 0 1 0 -7.8 0" fill="url(#hg)"/>
<path d="M451.1 643.1a3.9 3.9 0 1 0 7.8 0a3.9 3.9 0 1 0 -7.8 0M464.5 643.1a3.9 3.9 0 1 0 7.8 0a3.9 3.9 0 1 0 -7.8 0M478.0 643.1a3.9 3.9 0 1 0 7.8 0a3.9 3.9 0 1 0 -7.8 0M491.4 643.1a3.9 3.9 0 1 0 7.8 0a3.9 3.9 0 1 0 -7.8 0M504.8 643.1a3.9 3.9 0 1 0 7.8 0a3.9 3.9 0 1 0 -7.8 0M518.2 643.1a3.9 3.9 0 1 0 7.8 0a3.9 3.9 0 1 0 -7.8 0M531.7 643.1a3.9 3.9 0 1 0 7.8 0a3.9 3.9 0 1 0 -7.8 0M545.1 643.1a3.9 3.9 0 1 0 7.8 0a3.9 3.9 0 1 0 -7.8 0M558.5 643.1a3.9 3.9 0 1 0 7.8 0a3.9 3.9 0 1 0 -7.8 0M571.9 643.1a3.9 3.9 0 1 0 7.8 0a3.9 3.9 0 1 0 -7.8 0M585.4 643.1a3.9 3.9 0 1 0 7.8 0a3.9 3.9 0 1 0 -7.8 0M598.8 643.1a3.9 3.9 0 1 0 7.8 0a3.9 3.9 0 1 0 -7.8 0M612.2 643.1a3.9 3.9 0 1 0 7.8 0a3.9 3.9 0 1 0 -7.8 0M625.7 643.1a3.9 3.9 0 1 0 7.8 0a3.9 3.9 0 1 0 -7.8 0M639.1 643.1a3.9 3.9 0 1 0 7.8 0a3.9 3.9 0 1 0 -7.8 0M652.5 643.1a3.9 3.9 0 1 0 7.8 0a3.9 3.9 0 1 0 -7.8 0M665.9 643.1a3.9 3.9 0 1 0 7.8 0a3.9 3.9 0 1 0 -7.8 0M679.4 643.1a3.9 3.9 0 1 0 7.8 0a3.9 3.9 0 1 0 -7.8 0M692.8 643.1a3.9 3.9 0 1 0 7.8 0a3.9 3.9 0 1 0 -7.8 0M706.2 643.1a3.9 3.9 0 1 0 7.8 0a3.9 3.9 0 1 0 -7.8 0M719.6 643.1a3.9 3.9 0 1 0 7.8 0a3.9 3.9 0 1 0 -7.8 0M733.1 643.1a3.9 3.9 0 1 0 7.8 0a3.9 3.9 0 1 0 -7.8 0M746.5 643.1a3.9 3.9 0 1 0 7.8 0a3.9 3.9 0 1 0 -7.8 0M759.9 643.1a3.9 3.9 0 1 0 7.8 0a3.9 3.9 0 1 0 -7.8 0M773.3 643.1a3.9 3.9 0 1 0 7.8 0a3.9 3.9 0 1 0 -7.8 0M786.8 643.1a3.9 3.9 0 1 0 7.8 0a3.9 3.9 0 1 0 -7.8 0M800.2 643.1a3.9 3.9 0 1 0 7.8 0a3.9 3.9 0 1 0 -7.8 0M813.6 643.1a3.9 3.9 0 1 0 7.8 0a3.9 3.9 0 1 0 -7.8 0M827.1 643.1a3.9 3.9 0 1 0 7.8 0a3.9 3.9 0 1 0 -7.8 0M840.5 643.1a3.9 3.9 0 1 0 7.8 0a3.9 3.9 0 1 0 -7.8 0" fill="url(#hg)"/>
<path d="M451.1 656.6a3.9 3.9 0 1 0 7.8 0a3.9 3.9 0 1 0 -7.8 0M464.5 656.6a3.9 3.9 0 1 0 7.8 0a3.9 3.9 0 1 0 -7.8 0M478.0 656.6a3.9 3.9 0 1 0 7.8 0a3.9 3.9 0 1 0 -7.8 0M491.4 656.6a3.9 3.9 0 1 0 7.8 0a3.9 3.9 0 1 0 -7.8 0M504.8 656.6a3.9 3.9 0 1 0 7.8 0a3.9 3.9 0 1 0 -7.8 0M518.2 656.6a3.9 3.9 0 1 0 7.8 0a3.9 3.9 0 1 0 -7.8 0M531.7 656.6a3.9 3.9 0 1 0 7.8 0a3.9 3.9 0 1 0 -7.8 0M545.1 656.6a3.9 3.9 0 1 0 7.8 0a3.9 3.9 0 1 0 -7.8 0M558.5 656.6a3.9 3.9 0 1 0 7.8 0a3.9 3.9 0 1 0 -7.8 0M571.9 656.6a3.9 3.9 0 1 0 7.8 0a3.9 3.9 0 1 0 -7.8 0M585.4 656.6a3.9 3.9 0 1 0 7.8 0a3.9 3.9 0 1 0 -7.8 0M598.8 656.6a3.9 3.9 0 1 0 7.8 0a3.9 3.9 0 1 0 -7.8 0M612.2 656.6a3.9 3.9 0 1 0 7.8 0a3.9 3.9 0 1 0 -7.8 0M625.7 656.6a3.9 3.9 0 1 0 7.8 0a3.9 3.9 0 1 0 -7.8 0M639.1 656.6a3.9 3.9 0 1 0 7.8 0a3.9 3.9 0 1 0 -7.8 0M652.5 656.6a3.9 3.9 0 1 0 7.8 0a3.9 3.9 0 1 0 -7.8 0M665.9 656.6a3.9 3.9 0 1 0 7.8 0a3.9 3.9 0 1 0 -7.8 0M679.4 656.6a3.9 3.9 0 1 0 7.8 0a3.9 3.9 0 1 0 -7.8 0M692.8 656.6a3.9 3.9 0 1 0 7.8 0a3.9 3.9 0 1 0 -7.8 0M706.2 656.6a3.9 3.9 0 1 0 7.8 0a3.9 3.9 0 1 0 -7.8 0M719.6 656.6a3.9 3.9 0 1 0 7.8 0a3.9 3.9 0 1 0 -7.8 0M733.1 656.6a3.9 3.9 0 1 0 7.8 0a3.9 3.9 0 1 0 -7.8 0M746.5 656.6a3.9 3.9 0 1 0 7.8 0a3.9 3.9 0 1 0 -7.8 0M759.9 656.6a3.9 3.9 0 1 0 7.8 0a3.9 3.9 0 1 0 -7.8 0M773.3 656.6a3.9 3.9 0 1 0 7.8 0a3.9 3.9 0 1 0 -7.8 0M786.8 656.6a3.9 3.9 0 1 0 7.8 0a3.9 3.9 0 1 0 -7.8 0M800.2 656.6a3.9 3.9 0 1 0 7.8 0a3.9 3.9 0 1 0 -7.8 0M813.6 656.6a3.9 3.9 0 1 0 7.8 0a3.9 3.9 0 1 0 -7.8 0M827.1 656.6a3.9 3.9 0 1 0 7.8 0a3.9 3.9 0 1 0 -7.8 0M840.5 656.6a3.9 3.9 0 1 0 7.8 0a3.9 3.9 0 1 0 -7.8 0" fill="url(#hg)"/>
<path d="M451.1 670.0a3.9 3.9 0 1 0 7.8 0a3.9 3.9 0 1 0 -7.8 0M464.5 670.0a3.9 3.9 0 1 0 7.8 0a3.9 3.9 0 1 0 -7.8 0M478.0 670.0a3.9 3.9 0 1 0 7.8 0a3.9 3.9 0 1 0 -7.8 0M491.4 670.0a3.9 3.9 0 1 0 7.8 0a3.9 3.9 0 1 0 -7.8 0M504.8 670.0a3.9 3.9 0 1 0 7.8 0a3.9 3.9 0 1 0 -7.8 0M518.2 670.0a3.9 3.9 0 1 0 7.8 0a3.9 3.9 0 1 0 -7.8 0M531.7 670.0a3.9 3.9 0 1 0 7.8 0a3.9 3.9 0 1 0 -7.8 0M545.1 670.0a3.9 3.9 0 1 0 7.8 0a3.9 3.9 0 1 0 -7.8 0M558.5 670.0a3.9 3.9 0 1 0 7.8 0a3.9 3.9 0 1 0 -7.8 0M571.9 670.0a3.9 3.9 0 1 0 7.8 0a3.9 3.9 0 1 0 -7.8 0M585.4 670.0a3.9 3.9 0 1 0 7.8 0a3.9 3.9 0 1 0 -7.8 0M598.8 670.0a3.9 3.9 0 1 0 7.8 0a3.9 3.9 0 1 0 -7.8 0M612.2 670.0a3.9 3.9 0 1 0 7.8 0a3.9 3.9 0 1 0 -7.8 0M625.7 670.0a3.9 3.9 0 1 0 7.8 0a3.9 3.9 0 1 0 -7.8 0M639.1 670.0a3.9 3.9 0 1 0 7.8 0a3.9 3.9 0 1 0 -7.8 0M652.5 670.0a3.9 3.9 0 1 0 7.8 0a3.9 3.9 0 1 0 -7.8 0M665.9 670.0a3.9 3.9 0 1 0 7.8 0a3.9 3.9 0 1 0 -7.8 0M679.4 670.0a3.9 3.9 0 1 0 7.8 0a3.9 3.9 0 1 0 -7.8 0M692.8 670.0a3.9 3.9 0 1 0 7.8 0a3.9 3.9 0 1 0 -7.8 0M706.2 670.0a3.9 3.9 0 1 0 7.8 0a3.9 3.9 0 1 0 -7.8 0M719.6 670.0a3.9 3.9 0 1 0 7.8 0a3.9 3.9 0 1 0 -7.8 0M733.1 670.0a3.9 3.9 0 1 0 7.8 0a3.9 3.9 0 1 0 -7.8 0M746.5 670.0a3.9 3.9 0 1 0 7.8 0a3.9 3.9 0 1 0 -7.8 0M759.9 670.0a3.9 3.9 0 1 0 7.8 0a3.9 3.9 0 1 0 -7.8 0M773.3 670.0a3.9 3.9 0 1 0 7.8 0a3.9 3.9 0 1 0 -7.8 0M786.8 670.0a3.9 3.9 0 1 0 7.8 0a3.9 3.9 0 1 0 -7.8 0M800.2 670.0a3.9 3.9 0 1 0 7.8 0a3.9 3.9 0 1 0 -7.8 0M813.6 670.0a3.9 3.9 0 1 0 7.8 0a3.9 3.9 0 1 0 -7.8 0M827.1 670.0a3.9 3.9 0 1 0 7.8 0a3.9 3.9 0 1 0 -7.8 0M840.5 670.0a3.9 3.9 0 1 0 7.8 0a3.9 3.9 0 1 0 -7.8 0" fill="url(#hg)"/>
<path d="M451.1 683.5a3.9 3.9 0 1 0 7.8 0a3.9 3.9 0 1 0 -7.8 0M464.5 683.5a3.9 3.9 0 1 0 7.8 0a3.9 3.9 0 1 0 -7.8 0M478.0 683.5a3.9 3.9 0 1 0 7.8 0a3.9 3.9 0 1 0 -7.8 0M491.4 683.5a3.9 3.9 0 1 0 7.8 0a3.9 3.9 0 1 0 -7.8 0M504.8 683.5a3.9 3.9 0 1 0 7.8 0a3.9 3.9 0 1 0 -7.8 0M518.2 683.5a3.9 3.9 0 1 0 7.8 0a3.9 3.9 0 1 0 -7.8 0M531.7 683.5a3.9 3.9 0 1 0 7.8 0a3.9 3.9 0 1 0 -7.8 0M545.1 683.5a3.9 3.9 0 1 0 7.8 0a3.9 3.9 0 1 0 -7.8 0M558.5 683.5a3.9 3.9 0 1 0 7.8 0a3.9 3.9 0 1 0 -7.8 0M571.9 683.5a3.9 3.9 0 1 0 7.8 0a3.9 3.9 0 1 0 -7.8 0M585.4 683.5a3.9 3.9 0 1 0 7.8 0a3.9 3.9 0 1 0 -7.8 0M598.8 683.5a3.9 3.9 0 1 0 7.8 0a3.9 3.9 0 1 0 -7.8 0M612.2 683.5a3.9 3.9 0 1 0 7.8 0a3.9 3.9 0 1 0 -7.8 0M625.7 683.5a3.9 3.9 0 1 0 7.8 0a3.9 3.9 0 1 0 -7.8 0M639.1 683.5a3.9 3.9 0 1 0 7.8 0a3.9 3.9 0 1 0 -7.8 0M652.5 683.5a3.9 3.9 0 1 0 7.8 0a3.9 3.9 0 1 0 -7.8 0M665.9 683.5a3.9 3.9 0 1 0 7.8 0a3.9 3.9 0 1 0 -7.8 0M679.4 683.5a3.9 3.9 0 1 0 7.8 0a3.9 3.9 0 1 0 -7.8 0M692.8 683.5a3.9 3.9 0 1 0 7.8 0a3.9 3.9 0 1 0 -7.8 0M706.2 683.5a3.9 3.9 0 1 0 7.8 0a3.9 3.9 0 1 0 -7.8 0M719.6 683.5a3.9 3.9 0 1 0 7.8 0a3.9 3.9 0 1 0 -7.8 0M733.1 683.5a3.9 3.9 0 1 0 7.8 0a3.9 3.9 0 1 0 -7.8 0M746.5 683.5a3.9 3.9 0 1 0 7.8 0a3.9 3.9 0 1 0 -7.8 0M759.9 683.5a3.9 3.9 0 1 0 7.8 0a3.9 3.9 0 1 0 -7.8 0M773.3 683.5a3.9 3.9 0 1 0 7.8 0a3.9 3.9 0 1 0 -7.8 0M786.8 683.5a3.9 3.9 0 1 0 7.8 0a3.9 3.9 0 1 0 -7.8 0M800.2 683.5a3.9 3.9 0 1 0 7.8 0a3.9 3.9 0 1 0 -7.8 0M813.6 683.5a3.9 3.9 0 1 0 7.8 0a3.9 3.9 0 1 0 -7.8 0M827.1 683.5a3.9 3.9 0 1 0 7.8 0a3.9 3.9 0 1 0 -7.8 0M840.5 683.5a3.9 3.9 0 1 0 7.8 0a3.9 3.9 0 1 0 -7.8 0" fill="url(#hg)"/>
<path d="M451.1 696.9a3.9 3.9 0 1 0 7.8 0a3.9 3.9 0 1 0 -7.8 0M464.5 696.9a3.9 3.9 0 1 0 7.8 0a3.9 3.9 0 1 0 -7.8 0M478.0 696.9a3.9 3.9 0 1 0 7.8 0a3.9 3.9 0 1 0 -7.8 0M491.4 696.9a3.9 3.9 0 1 0 7.8 0a3.9 3.9 0 1 0 -7.8 0M504.8 696.9a3.9 3.9 0 1 0 7.8 0a3.9 3.9 0 1 0 -7.8 0M518.2 696.9a3.9 3.9 0 1 0 7.8 0a3.9 3.9 0 1 0 -7.8 0M531.7 696.9a3.9 3.9 0 1 0 7.8 0a3.9 3.9 0 1 0 -7.8 0M545.1 696.9a3.9 3.9 0 1 0 7.8 0a3.9 3.9 0 1 0 -7.8 0M558.5 696.9a3.9 3.9 0 1 0 7.8 0a3.9 3.9 0 1 0 -7.8 0M571.9 696.9a3.9 3.9 0 1 0 7.8 0a3.9 3.9 0 1 0 -7.8 0M585.4 696.9a3.9 3.9 0 1 0 7.8 0a3.9 3.9 0 1 0 -7.8 0M598.8 696.9a3.9 3.9 0 1 0 7.8 0a3.9 3.9 0 1 0 -7.8 0M612.2 696.9a3.9 3.9 0 1 0 7.8 0a3.9 3.9 0 1 0 -7.8 0M625.7 696.9a3.9 3.9 0 1 0 7.8 0a3.9 3.9 0 1 0 -7.8 0M639.1 696.9a3.9 3.9 0 1 0 7.8 0a3.9 3.9 0 1 0 -7.8 0M652.5 696.9a3.9 3.9 0 1 0 7.8 0a3.9 3.9 0 1 0 -7.8 0M665.9 696.9a3.9 3.9 0 1 0 7.8 0a3.9 3.9 0 1 0 -7.8 0M679.4 696.9a3.9 3.9 0 1 0 7.8 0a3.9 3.9 0 1 0 -7.8 0M692.8 696.9a3.9 3.9 0 1 0 7.8 0a3.9 3.9 0 1 0 -7.8 0M706.2 696.9a3.9 3.9 0 1 0 7.8 0a3.9 3.9 0 1 0 -7.8 0M719.6 696.9a3.9 3.9 0 1 0 7.8 0a3.9 3.9 0 1 0 -7.8 0M733.1 696.9a3.9 3.9 0 1 0 7.8 0a3.9 3.9 0 1 0 -7.8 0M746.5 696.9a3.9 3.9 0 1 0 7.8 0a3.9 3.9 0 1 0 -7.8 0M759.9 696.9a3.9 3.9 0 1 0 7.8 0a3.9 3.9 0 1 0 -7.8 0M773.3 696.9a3.9 3.9 0 1 0 7.8 0a3.9 3.9 0 1 0 -7.8 0M786.8 696.9a3.9 3.9 0 1 0 7.8 0a3.9 3.9 0 1 0 -7.8 0M800.2 696.9a3.9 3.9 0 1 0 7.8 0a3.9 3.9 0 1 0 -7.8 0M813.6 696.9a3.9 3.9 0 1 0 7.8 0a3.9 3.9 0 1 0 -7.8 0M827.1 696.9a3.9 3.9 0 1 0 7.8 0a3.9 3.9 0 1 0 -7.8 0M840.5 696.9a3.9 3.9 0 1 0 7.8 0a3.9 3.9 0 1 0 -7.8 0" fill="url(#hg)"/>
<path d="M451.1 737.1a3.9 3.9 0 1 0 7.8 0a3.9 3.9 0 1 0 -7.8 0M464.5 737.1a3.9 3.9 0 1 0 7.8 0a3.9 3.9 0 1 0 -7.8 0M478.0 737.1a3.9 3.9 0 1 0 7.8 0a3.9 3.9 0 1 0 -7.8 0M491.4 737.1a3.9 3.9 0 1 0 7.8 0a3.9 3.9 0 1 0 -7.8 0M504.8 737.1a3.9 3.9 0 1 0 7.8 0a3.9 3.9 0 1 0 -7.8 0M518.2 737.1a3.9 3.9 0 1 0 7.8 0a3.9 3.9 0 1 0 -7.8 0M531.7 737.1a3.9 3.9 0 1 0 7.8 0a3.9 3.9 0 1 0 -7.8 0M545.1 737.1a3.9 3.9 0 1 0 7.8 0a3.9 3.9 0 1 0 -7.8 0M558.5 737.1a3.9 3.9 0 1 0 7.8 0a3.9 3.9 0 1 0 -7.8 0M571.9 737.1a3.9 3.9 0 1 0 7.8 0a3.9 3.9 0 1 0 -7.8 0M585.4 737.1a3.9 3.9 0 1 0 7.8 0a3.9 3.9 0 1 0 -7.8 0M598.8 737.1a3.9 3.9 0 1 0 7.8 0a3.9 3.9 0 1 0 -7.8 0M612.2 737.1a3.9 3.9 0 1 0 7.8 0a3.9 3.9 0 1 0 -7.8 0M625.7 737.1a3.9 3.9 0 1 0 7.8 0a3.9 3.9 0 1 0 -7.8 0M639.1 737.1a3.9 3.9 0 1 0 7.8 0a3.9 3.9 0 1 0 -7.8 0M652.5 737.1a3.9 3.9 0 1 0 7.8 0a3.9 3.9 0 1 0 -7.8 0M665.9 737.1a3.9 3.9 0 1 0 7.8 0a3.9 3.9 0 1 0 -7.8 0M679.4 737.1a3.9 3.9 0 1 0 7.8 0a3.9 3.9 0 1 0 -7.8 0M692.8 737.1a3.9 3.9 0 1 0 7.8 0a3.9 3.9 0 1 0 -7.8 0M706.2 737.1a3.9 3.9 0 1 0 7.8 0a3.9 3.9 0 1 0 -7.8 0M719.6 737.1a3.9 3.9 0 1 0 7.8 0a3.9 3.9 0 1 0 -7.8 0M733.1 737.1a3.9 3.9 0 1 0 7.8 0a3.9 3.9 0 1 0 -7.8 0M746.5 737.1a3.9 3.9 0 1 0 7.8 0a3.9 3.9 0 1 0 -7.8 0M759.9 737.1a3.9 3.9 0 1 0 7.8 0a3.9 3.9 0 1 0 -7.8 0M773.3 737.1a3.9 3.9 0 1 0 7.8 0a3.9 3.9 0 1 0 -7.8 0M786.8 737.1a3.9 3.9 0 1 0 7.8 0a3.9 3.9 0 1 0 -7.8 0M800.2 737.1a3.9 3.9 0 1 0 7.8 0a3.9 3.9 0 1 0 -7.8 0M813.6 737.1a3.9 3.9 0 1 0 7.8 0a3.9 3.9 0 1 0 -7.8 0M827.1 737.1a3.9 3.9 0 1 0 7.8 0a3.9 3.9 0 1 0 -7.8 0M840.5 737.1a3.9 3.9 0 1 0 7.8 0a3.9 3.9 0 1 0 -7.8 0" fill="url(#hg)"/>
<path d="M451.1 750.6a3.9 3.9 0 1 0 7.8 0a3.9 3.9 0 1 0 -7.8 0M464.5 750.6a3.9 3.9 0 1 0 7.8 0a3.9 3.9 0 1 0 -7.8 0M478.0 750.6a3.9 3.9 0 1 0 7.8 0a3.9 3.9 0 1 0 -7.8 0M491.4 750.6a3.9 3.9 0 1 0 7.8 0a3.9 3.9 0 1 0 -7.8 0M504.8 750.6a3.9 3.9 0 1 0 7.8 0a3.9 3.9 0 1 0 -7.8 0M518.2 750.6a3.9 3.9 0 1 0 7.8 0a3.9 3.9 0 1 0 -7.8 0M531.7 750.6a3.9 3.9 0 1 0 7.8 0a3.9 3.9 0 1 0 -7.8 0M545.1 750.6a3.9 3.9 0 1 0 7.8 0a3.9 3.9 0 1 0 -7.8 0M558.5 750.6a3.9 3.9 0 1 0 7.8 0a3.9 3.9 0 1 0 -7.8 0M571.9 750.6a3.9 3.9 0 1 0 7.8 0a3.9 3.9 0 1 0 -7.8 0M585.4 750.6a3.9 3.9 0 1 0 7.8 0a3.9 3.9 0 1 0 -7.8 0M598.8 750.6a3.9 3.9 0 1 0 7.8 0a3.9 3.9 0 1 0 -7.8 0M612.2 750.6a3.9 3.9 0 1 0 7.8 0a3.9 3.9 0 1 0 -7.8 0M625.7 750.6a3.9 3.9 0 1 0 7.8 0a3.9 3.9 0 1 0 -7.8 0M639.1 750.6a3.9 3.9 0 1 0 7.8 0a3.9 3.9 0 1 0 -7.8 0M652.5 750.6a3.9 3.9 0 1 0 7.8 0a3.9 3.9 0 1 0 -7.8 0M665.9 750.6a3.9 3.9 0 1 0 7.8 0a3.9 3.9 0 1 0 -7.8 0M679.4 750.6a3.9 3.9 0 1 0 7.8 0a3.9 3.9 0 1 0 -7.8 0M692.8 750.6a3.9 3.9 0 1 0 7.8 0a3.9 3.9 0 1 0 -7.8 0M706.2 750.6a3.9 3.9 0 1 0 7.8 0a3.9 3.9 0 1 0 -7.8 0M719.6 750.6a3.9 3.9 0 1 0 7.8 0a3.9 3.9 0 1 0 -7.8 0M733.1 750.6a3.9 3.9 0 1 0 7.8 0a3.9 3.9 0 1 0 -7.8 0M746.5 750.6a3.9 3.9 0 1 0 7.8 0a3.9 3.9 0 1 0 -7.8 0M759.9 750.6a3.9 3.9 0 1 0 7.8 0a3.9 3.9 0 1 0 -7.8 0M773.3 750.6a3.9 3.9 0 1 0 7.8 0a3.9 3.9 0 1 0 -7.8 0M786.8 750.6a3.9 3.9 0 1 0 7.8 0a3.9 3.9 0 1 0 -7.8 0M800.2 750.6a3.9 3.9 0 1 0 7.8 0a3.9 3.9 0 1 0 -7.8 0M813.6 750.6a3.9 3.9 0 1 0 7.8 0a3.9 3.9 0 1 0 -7.8 0M827.1 750.6a3.9 3.9 0 1 0 7.8 0a3.9 3.9 0 1 0 -7.8 0M840.5 750.6a3.9 3.9 0 1 0 7.8 0a3.9 3.9 0 1 0 -7.8 0" fill="url(#hg)"/>
<path d="M452.9 495.5a2.1 2.1 0 1 0 4.2 0a2.1 2.1 0 1 0 -4.2 0M466.3 495.5a2.1 2.1 0 1 0 4.2 0a2.1 2.1 0 1 0 -4.2 0M479.8 495.5a2.1 2.1 0 1 0 4.2 0a2.1 2.1 0 1 0 -4.2 0M493.2 495.5a2.1 2.1 0 1 0 4.2 0a2.1 2.1 0 1 0 -4.2 0M506.6 495.5a2.1 2.1 0 1 0 4.2 0a2.1 2.1 0 1 0 -4.2 0M520.0 495.5a2.1 2.1 0 1 0 4.2 0a2.1 2.1 0 1 0 -4.2 0M533.5 495.5a2.1 2.1 0 1 0 4.2 0a2.1 2.1 0 1 0 -4.2 0M546.9 495.5a2.1 2.1 0 1 0 4.2 0a2.1 2.1 0 1 0 -4.2 0M560.3 495.5a2.1 2.1 0 1 0 4.2 0a2.1 2.1 0 1 0 -4.2 0M573.7 495.5a2.1 2.1 0 1 0 4.2 0a2.1 2.1 0 1 0 -4.2 0M587.2 495.5a2.1 2.1 0 1 0 4.2 0a2.1 2.1 0 1 0 -4.2 0M600.6 495.5a2.1 2.1 0 1 0 4.2 0a2.1 2.1 0 1 0 -4.2 0M614.0 495.5a2.1 2.1 0 1 0 4.2 0a2.1 2.1 0 1 0 -4.2 0M627.5 495.5a2.1 2.1 0 1 0 4.2 0a2.1 2.1 0 1 0 -4.2 0M640.9 495.5a2.1 2.1 0 1 0 4.2 0a2.1 2.1 0 1 0 -4.2 0M654.3 495.5a2.1 2.1 0 1 0 4.2 0a2.1 2.1 0 1 0 -4.2 0M667.7 495.5a2.1 2.1 0 1 0 4.2 0a2.1 2.1 0 1 0 -4.2 0M681.2 495.5a2.1 2.1 0 1 0 4.2 0a2.1 2.1 0 1 0 -4.2 0M694.6 495.5a2.1 2.1 0 1 0 4.2 0a2.1 2.1 0 1 0 -4.2 0M708.0 495.5a2.1 2.1 0 1 0 4.2 0a2.1 2.1 0 1 0 -4.2 0M721.4 495.5a2.1 2.1 0 1 0 4.2 0a2.1 2.1 0 1 0 -4.2 0M734.9 495.5a2.1 2.1 0 1 0 4.2 0a2.1 2.1 0 1 0 -4.2 0M748.3 495.5a2.1 2.1 0 1 0 4.2 0a2.1 2.1 0 1 0 -4.2 0M761.7 495.5a2.1 2.1 0 1 0 4.2 0a2.1 2.1 0 1 0 -4.2 0M775.1 495.5a2.1 2.1 0 1 0 4.2 0a2.1 2.1 0 1 0 -4.2 0M788.6 495.5a2.1 2.1 0 1 0 4.2 0a2.1 2.1 0 1 0 -4.2 0M802.0 495.5a2.1 2.1 0 1 0 4.2 0a2.1 2.1 0 1 0 -4.2 0M815.4 495.5a2.1 2.1 0 1 0 4.2 0a2.1 2.1 0 1 0 -4.2 0M828.9 495.5a2.1 2.1 0 1 0 4.2 0a2.1 2.1 0 1 0 -4.2 0M842.3 495.5a2.1 2.1 0 1 0 4.2 0a2.1 2.1 0 1 0 -4.2 0M452.9 509.0a2.1 2.1 0 1 0 4.2 0a2.1 2.1 0 1 0 -4.2 0M466.3 509.0a2.1 2.1 0 1 0 4.2 0a2.1 2.1 0 1 0 -4.2 0M479.8 509.0a2.1 2.1 0 1 0 4.2 0a2.1 2.1 0 1 0 -4.2 0M493.2 509.0a2.1 2.1 0 1 0 4.2 0a2.1 2.1 0 1 0 -4.2 0M506.6 509.0a2.1 2.1 0 1 0 4.2 0a2.1 2.1 0 1 0 -4.2 0M520.0 509.0a2.1 2.1 0 1 0 4.2 0a2.1 2.1 0 1 0 -4.2 0M533.5 509.0a2.1 2.1 0 1 0 4.2 0a2.1 2.1 0 1 0 -4.2 0M546.9 509.0a2.1 2.1 0 1 0 4.2 0a2.1 2.1 0 1 0 -4.2 0M560.3 509.0a2.1 2.1 0 1 0 4.2 0a2.1 2.1 0 1 0 -4.2 0M573.7 509.0a2.1 2.1 0 1 0 4.2 0a2.1 2.1 0 1 0 -4.2 0M587.2 509.0a2.1 2.1 0 1 0 4.2 0a2.1 2.1 0 1 0 -4.2 0M600.6 509.0a2.1 2.1 0 1 0 4.2 0a2.1 2.1 0 1 0 -4.2 0M614.0 509.0a2.1 2.1 0 1 0 4.2 0a2.1 2.1 0 1 0 -4.2 0M627.5 509.0a2.1 2.1 0 1 0 4.2 0a2.1 2.1 0 1 0 -4.2 0M640.9 509.0a2.1 2.1 0 1 0 4.2 0a2.1 2.1 0 1 0 -4.2 0M654.3 509.0a2.1 2.1 0 1 0 4.2 0a2.1 2.1 0 1 0 -4.2 0M667.7 509.0a2.1 2.1 0 1 0 4.2 0a2.1 2.1 0 1 0 -4.2 0M681.2 509.0a2.1 2.1 0 1 0 4.2 0a2.1 2.1 0 1 0 -4.2 0M694.6 509.0a2.1 2.1 0 1 0 4.2 0a2.1 2.1 0 1 0 -4.2 0M708.0 509.0a2.1 2.1 0 1 0 4.2 0a2.1 2.1 0 1 0 -4.2 0M721.4 509.0a2.1 2.1 0 1 0 4.2 0a2.1 2.1 0 1 0 -4.2 0M734.9 509.0a2.1 2.1 0 1 0 4.2 0a2.1 2.1 0 1 0 -4.2 0M748.3 509.0a2.1 2.1 0 1 0 4.2 0a2.1 2.1 0 1 0 -4.2 0M761.7 509.0a2.1 2.1 0 1 0 4.2 0a2.1 2.1 0 1 0 -4.2 0M775.1 509.0a2.1 2.1 0 1 0 4.2 0a2.1 2.1 0 1 0 -4.2 0M788.6 509.0a2.1 2.1 0 1 0 4.2 0a2.1 2.1 0 1 0 -4.2 0M802.0 509.0a2.1 2.1 0 1 0 4.2 0a2.1 2.1 0 1 0 -4.2 0M815.4 509.0a2.1 2.1 0 1 0 4.2 0a2.1 2.1 0 1 0 -4.2 0M828.9 509.0a2.1 2.1 0 1 0 4.2 0a2.1 2.1 0 1 0 -4.2 0M842.3 509.0a2.1 2.1 0 1 0 4.2 0a2.1 2.1 0 1 0 -4.2 0M452.9 549.1a2.1 2.1 0 1 0 4.2 0a2.1 2.1 0 1 0 -4.2 0M466.3 549.1a2.1 2.1 0 1 0 4.2 0a2.1 2.1 0 1 0 -4.2 0M479.8 549.1a2.1 2.1 0 1 0 4.2 0a2.1 2.1 0 1 0 -4.2 0M493.2 549.1a2.1 2.1 0 1 0 4.2 0a2.1 2.1 0 1 0 -4.2 0M506.6 549.1a2.1 2.1 0 1 0 4.2 0a2.1 2.1 0 1 0 -4.2 0M520.0 549.1a2.1 2.1 0 1 0 4.2 0a2.1 2.1 0 1 0 -4.2 0M533.5 549.1a2.1 2.1 0 1 0 4.2 0a2.1 2.1 0 1 0 -4.2 0M546.9 549.1a2.1 2.1 0 1 0 4.2 0a2.1 2.1 0 1 0 -4.2 0M560.3 549.1a2.1 2.1 0 1 0 4.2 0a2.1 2.1 0 1 0 -4.2 0M573.7 549.1a2.1 2.1 0 1 0 4.2 0a2.1 2.1 0 1 0 -4.2 0M587.2 549.1a2.1 2.1 0 1 0 4.2 0a2.1 2.1 0 1 0 -4.2 0M600.6 549.1a2.1 2.1 0 1 0 4.2 0a2.1 2.1 0 1 0 -4.2 0M614.0 549.1a2.1 2.1 0 1 0 4.2 0a2.1 2.1 0 1 0 -4.2 0M627.5 549.1a2.1 2.1 0 1 0 4.2 0a2.1 2.1 0 1 0 -4.2 0M640.9 549.1a2.1 2.1 0 1 0 4.2 0a2.1 2.1 0 1 0 -4.2 0M654.3 549.1a2.1 2.1 0 1 0 4.2 0a2.1 2.1 0 1 0 -4.2 0M667.7 549.1a2.1 2.1 0 1 0 4.2 0a2.1 2.1 0 1 0 -4.2 0M681.2 549.1a2.1 2.1 0 1 0 4.2 0a2.1 2.1 0 1 0 -4.2 0M694.6 549.1a2.1 2.1 0 1 0 4.2 0a2.1 2.1 0 1 0 -4.2 0M708.0 549.1a2.1 2.1 0 1 0 4.2 0a2.1 2.1 0 1 0 -4.2 0M721.4 549.1a2.1 2.1 0 1 0 4.2 0a2.1 2.1 0 1 0 -4.2 0M734.9 549.1a2.1 2.1 0 1 0 4.2 0a2.1 2.1 0 1 0 -4.2 0M748.3 549.1a2.1 2.1 0 1 0 4.2 0a2.1 2.1 0 1 0 -4.2 0M761.7 549.1a2.1 2.1 0 1 0 4.2 0a2.1 2.1 0 1 0 -4.2 0M775.1 549.1a2.1 2.1 0 1 0 4.2 0a2.1 2.1 0 1 0 -4.2 0M788.6 549.1a2.1 2.1 0 1 0 4.2 0a2.1 2.1 0 1 0 -4.2 0M802.0 549.1a2.1 2.1 0 1 0 4.2 0a2.1 2.1 0 1 0 -4.2 0M815.4 549.1a2.1 2.1 0 1 0 4.2 0a2.1 2.1 0 1 0 -4.2 0M828.9 549.1a2.1 2.1 0 1 0 4.2 0a2.1 2.1 0 1 0 -4.2 0M842.3 549.1a2.1 2.1 0 1 0 4.2 0a2.1 2.1 0 1 0 -4.2 0M452.9 562.6a2.1 2.1 0 1 0 4.2 0a2.1 2.1 0 1 0 -4.2 0M466.3 562.6a2.1 2.1 0 1 0 4.2 0a2.1 2.1 0 1 0 -4.2 0M479.8 562.6a2.1 2.1 0 1 0 4.2 0a2.1 2.1 0 1 0 -4.2 0M493.2 562.6a2.1 2.1 0 1 0 4.2 0a2.1 2.1 0 1 0 -4.2 0M506.6 562.6a2.1 2.1 0 1 0 4.2 0a2.1 2.1 0 1 0 -4.2 0M520.0 562.6a2.1 2.1 0 1 0 4.2 0a2.1 2.1 0 1 0 -4.2 0M533.5 562.6a2.1 2.1 0 1 0 4.2 0a2.1 2.1 0 1 0 -4.2 0M546.9 562.6a2.1 2.1 0 1 0 4.2 0a2.1 2.1 0 1 0 -4.2 0M560.3 562.6a2.1 2.1 0 1 0 4.2 0a2.1 2.1 0 1 0 -4.2 0M573.7 562.6a2.1 2.1 0 1 0 4.2 0a2.1 2.1 0 1 0 -4.2 0M587.2 562.6a2.1 2.1 0 1 0 4.2 0a2.1 2.1 0 1 0 -4.2 0M600.6 562.6a2.1 2.1 0 1 0 4.2 0a2.1 2.1 0 1 0 -4.2 0M614.0 562.6a2.1 2.1 0 1 0 4.2 0a2.1 2.1 0 1 0 -4.2 0M627.5 562.6a2.1 2.1 0 1 0 4.2 0a2.1 2.1 0 1 0 -4.2 0M640.9 562.6a2.1 2.1 0 1 0 4.2 0a2.1 2.1 0 1 0 -4.2 0M654.3 562.6a2.1 2.1 0 1 0 4.2 0a2.1 2.1 0 1 0 -4.2 0M667.7 562.6a2.1 2.1 0 1 0 4.2 0a2.1 2.1 0 1 0 -4.2 0M681.2 562.6a2.1 2.1 0 1 0 4.2 0a2.1 2.1 0 1 0 -4.2 0M694.6 562.6a2.1 2.1 0 1 0 4.2 0a2.1 2.1 0 1 0 -4.2 0M708.0 562.6a2.1 2.1 0 1 0 4.2 0a2.1 2.1 0 1 0 -4.2 0M721.4 562.6a2.1 2.1 0 1 0 4.2 0a2.1 2.1 0 1 0 -4.2 0M734.9 562.6a2.1 2.1 0 1 0 4.2 0a2.1 2.1 0 1 0 -4.2 0M748.3 562.6a2.1 2.1 0 1 0 4.2 0a2.1 2.1 0 1 0 -4.2 0M761.7 562.6a2.1 2.1 0 1 0 4.2 0a2.1 2.1 0 1 0 -4.2 0M775.1 562.6a2.1 2.1 0 1 0 4.2 0a2.1 2.1 0 1 0 -4.2 0M788.6 562.6a2.1 2.1 0 1 0 4.2 0a2.1 2.1 0 1 0 -4.2 0M802.0 562.6a2.1 2.1 0 1 0 4.2 0a2.1 2.1 0 1 0 -4.2 0M815.4 562.6a2.1 2.1 0 1 0 4.2 0a2.1 2.1 0 1 0 -4.2 0M828.9 562.6a2.1 2.1 0 1 0 4.2 0a2.1 2.1 0 1 0 -4.2 0M842.3 562.6a2.1 2.1 0 1 0 4.2 0a2.1 2.1 0 1 0 -4.2 0M452.9 576.1a2.1 2.1 0 1 0 4.2 0a2.1 2.1 0 1 0 -4.2 0M466.3 576.1a2.1 2.1 0 1 0 4.2 0a2.1 2.1 0 1 0 -4.2 0M479.8 576.1a2.1 2.1 0 1 0 4.2 0a2.1 2.1 0 1 0 -4.2 0M493.2 576.1a2.1 2.1 0 1 0 4.2 0a2.1 2.1 0 1 0 -4.2 0M506.6 576.1a2.1 2.1 0 1 0 4.2 0a2.1 2.1 0 1 0 -4.2 0M520.0 576.1a2.1 2.1 0 1 0 4.2 0a2.1 2.1 0 1 0 -4.2 0M533.5 576.1a2.1 2.1 0 1 0 4.2 0a2.1 2.1 0 1 0 -4.2 0M546.9 576.1a2.1 2.1 0 1 0 4.2 0a2.1 2.1 0 1 0 -4.2 0M560.3 576.1a2.1 2.1 0 1 0 4.2 0a2.1 2.1 0 1 0 -4.2 0M573.7 576.1a2.1 2.1 0 1 0 4.2 0a2.1 2.1 0 1 0 -4.2 0M587.2 576.1a2.1 2.1 0 1 0 4.2 0a2.1 2.1 0 1 0 -4.2 0M600.6 576.1a2.1 2.1 0 1 0 4.2 0a2.1 2.1 0 1 0 -4.2 0M614.0 576.1a2.1 2.1 0 1 0 4.2 0a2.1 2.1 0 1 0 -4.2 0M627.5 576.1a2.1 2.1 0 1 0 4.2 0a2.1 2.1 0 1 0 -4.2 0M640.9 576.1a2.1 2.1 0 1 0 4.2 0a2.1 2.1 0 1 0 -4.2 0M654.3 576.1a2.1 2.1 0 1 0 4.2 0a2.1 2.1 0 1 0 -4.2 0M667.7 576.1a2.1 2.1 0 1 0 4.2 0a2.1 2.1 0 1 0 -4.2 0M681.2 576.1a2.1 2.1 0 1 0 4.2 0a2.1 2.1 0 1 0 -4.2 0M694.6 576.1a2.1 2.1 0 1 0 4.2 0a2.1 2.1 0 1 0 -4.2 0M708.0 576.1a2.1 2.1 0 1 0 4.2 0a2.1 2.1 0 1 0 -4.2 0M721.4 576.1a2.1 2.1 0 1 0 4.2 0a2.1 2.1 0 1 0 -4.2 0M734.9 576.1a2.1 2.1 0 1 0 4.2 0a2.1 2.1 0 1 0 -4.2 0M748.3 576.1a2.1 2.1 0 1 0 4.2 0a2.1 2.1 0 1 0 -4.2 0M761.7 576.1a2.1 2.1 0 1 0 4.2 0a2.1 2.1 0 1 0 -4.2 0M775.1 576.1a2.1 2.1 0 1 0 4.2 0a2.1 2.1 0 1 0 -4.2 0M788.6 576.1a2.1 2.1 0 1 0 4.2 0a2.1 2.1 0 1 0 -4.2 0M802.0 576.1a2.1 2.1 0 1 0 4.2 0a2.1 2.1 0 1 0 -4.2 0M815.4 576.1a2.1 2.1 0 1 0 4.2 0a2.1 2.1 0 1 0 -4.2 0M828.9 576.1a2.1 2.1 0 1 0 4.2 0a2.1 2.1 0 1 0 -4.2 0M842.3 576.1a2.1 2.1 0 1 0 4.2 0a2.1 2.1 0 1 0 -4.2 0M452.9 589.6a2.1 2.1 0 1 0 4.2 0a2.1 2.1 0 1 0 -4.2 0M466.3 589.6a2.1 2.1 0 1 0 4.2 0a2.1 2.1 0 1 0 -4.2 0M479.8 589.6a2.1 2.1 0 1 0 4.2 0a2.1 2.1 0 1 0 -4.2 0M493.2 589.6a2.1 2.1 0 1 0 4.2 0a2.1 2.1 0 1 0 -4.2 0M506.6 589.6a2.1 2.1 0 1 0 4.2 0a2.1 2.1 0 1 0 -4.2 0M520.0 589.6a2.1 2.1 0 1 0 4.2 0a2.1 2.1 0 1 0 -4.2 0M533.5 589.6a2.1 2.1 0 1 0 4.2 0a2.1 2.1 0 1 0 -4.2 0M546.9 589.6a2.1 2.1 0 1 0 4.2 0a2.1 2.1 0 1 0 -4.2 0M560.3 589.6a2.1 2.1 0 1 0 4.2 0a2.1 2.1 0 1 0 -4.2 0M573.7 589.6a2.1 2.1 0 1 0 4.2 0a2.1 2.1 0 1 0 -4.2 0M587.2 589.6a2.1 2.1 0 1 0 4.2 0a2.1 2.1 0 1 0 -4.2 0M600.6 589.6a2.1 2.1 0 1 0 4.2 0a2.1 2.1 0 1 0 -4.2 0M614.0 589.6a2.1 2.1 0 1 0 4.2 0a2.1 2.1 0 1 0 -4.2 0M627.5 589.6a2.1 2.1 0 1 0 4.2 0a2.1 2.1 0 1 0 -4.2 0M640.9 589.6a2.1 2.1 0 1 0 4.2 0a2.1 2.1 0 1 0 -4.2 0M654.3 589.6a2.1 2.1 0 1 0 4.2 0a2.1 2.1 0 1 0 -4.2 0M667.7 589.6a2.1 2.1 0 1 0 4.2 0a2.1 2.1 0 1 0 -4.2 0M681.2 589.6a2.1 2.1 0 1 0 4.2 0a2.1 2.1 0 1 0 -4.2 0M694.6 589.6a2.1 2.1 0 1 0 4.2 0a2.1 2.1 0 1 0 -4.2 0M708.0 589.6a2.1 2.1 0 1 0 4.2 0a2.1 2.1 0 1 0 -4.2 0M721.4 589.6a2.1 2.1 0 1 0 4.2 0a2.1 2.1 0 1 0 -4.2 0M734.9 589.6a2.1 2.1 0 1 0 4.2 0a2.1 2.1 0 1 0 -4.2 0M748.3 589.6a2.1 2.1 0 1 0 4.2 0a2.1 2.1 0 1 0 -4.2 0M761.7 589.6a2.1 2.1 0 1 0 4.2 0a2.1 2.1 0 1 0 -4.2 0M775.1 589.6a2.1 2.1 0 1 0 4.2 0a2.1 2.1 0 1 0 -4.2 0M788.6 589.6a2.1 2.1 0 1 0 4.2 0a2.1 2.1 0 1 0 -4.2 0M802.0 589.6a2.1 2.1 0 1 0 4.2 0a2.1 2.1 0 1 0 -4.2 0M815.4 589.6a2.1 2.1 0 1 0 4.2 0a2.1 2.1 0 1 0 -4.2 0M828.9 589.6a2.1 2.1 0 1 0 4.2 0a2.1 2.1 0 1 0 -4.2 0M842.3 589.6a2.1 2.1 0 1 0 4.2 0a2.1 2.1 0 1 0 -4.2 0M452.9 603.0a2.1 2.1 0 1 0 4.2 0a2.1 2.1 0 1 0 -4.2 0M466.3 603.0a2.1 2.1 0 1 0 4.2 0a2.1 2.1 0 1 0 -4.2 0M479.8 603.0a2.1 2.1 0 1 0 4.2 0a2.1 2.1 0 1 0 -4.2 0M493.2 603.0a2.1 2.1 0 1 0 4.2 0a2.1 2.1 0 1 0 -4.2 0M506.6 603.0a2.1 2.1 0 1 0 4.2 0a2.1 2.1 0 1 0 -4.2 0M520.0 603.0a2.1 2.1 0 1 0 4.2 0a2.1 2.1 0 1 0 -4.2 0M533.5 603.0a2.1 2.1 0 1 0 4.2 0a2.1 2.1 0 1 0 -4.2 0M546.9 603.0a2.1 2.1 0 1 0 4.2 0a2.1 2.1 0 1 0 -4.2 0M560.3 603.0a2.1 2.1 0 1 0 4.2 0a2.1 2.1 0 1 0 -4.2 0M573.7 603.0a2.1 2.1 0 1 0 4.2 0a2.1 2.1 0 1 0 -4.2 0M587.2 603.0a2.1 2.1 0 1 0 4.2 0a2.1 2.1 0 1 0 -4.2 0M600.6 603.0a2.1 2.1 0 1 0 4.2 0a2.1 2.1 0 1 0 -4.2 0M614.0 603.0a2.1 2.1 0 1 0 4.2 0a2.1 2.1 0 1 0 -4.2 0M627.5 603.0a2.1 2.1 0 1 0 4.2 0a2.1 2.1 0 1 0 -4.2 0M640.9 603.0a2.1 2.1 0 1 0 4.2 0a2.1 2.1 0 1 0 -4.2 0M654.3 603.0a2.1 2.1 0 1 0 4.2 0a2.1 2.1 0 1 0 -4.2 0M667.7 603.0a2.1 2.1 0 1 0 4.2 0a2.1 2.1 0 1 0 -4.2 0M681.2 603.0a2.1 2.1 0 1 0 4.2 0a2.1 2.1 0 1 0 -4.2 0M694.6 603.0a2.1 2.1 0 1 0 4.2 0a2.1 2.1 0 1 0 -4.2 0M708.0 603.0a2.1 2.1 0 1 0 4.2 0a2.1 2.1 0 1 0 -4.2 0M721.4 603.0a2.1 2.1 0 1 0 4.2 0a2.1 2.1 0 1 0 -4.2 0M734.9 603.0a2.1 2.1 0 1 0 4.2 0a2.1 2.1 0 1 0 -4.2 0M748.3 603.0a2.1 2.1 0 1 0 4.2 0a2.1 2.1 0 1 0 -4.2 0M761.7 603.0a2.1 2.1 0 1 0 4.2 0a2.1 2.1 0 1 0 -4.2 0M775.1 603.0a2.1 2.1 0 1 0 4.2 0a2.1 2.1 0 1 0 -4.2 0M788.6 603.0a2.1 2.1 0 1 0 4.2 0a2.1 2.1 0 1 0 -4.2 0M802.0 603.0a2.1 2.1 0 1 0 4.2 0a2.1 2.1 0 1 0 -4.2 0M815.4 603.0a2.1 2.1 0 1 0 4.2 0a2.1 2.1 0 1 0 -4.2 0M828.9 603.0a2.1 2.1 0 1 0 4.2 0a2.1 2.1 0 1 0 -4.2 0M842.3 603.0a2.1 2.1 0 1 0 4.2 0a2.1 2.1 0 1 0 -4.2 0M452.9 643.1a2.1 2.1 0 1 0 4.2 0a2.1 2.1 0 1 0 -4.2 0M466.3 643.1a2.1 2.1 0 1 0 4.2 0a2.1 2.1 0 1 0 -4.2 0M479.8 643.1a2.1 2.1 0 1 0 4.2 0a2.1 2.1 0 1 0 -4.2 0M493.2 643.1a2.1 2.1 0 1 0 4.2 0a2.1 2.1 0 1 0 -4.2 0M506.6 643.1a2.1 2.1 0 1 0 4.2 0a2.1 2.1 0 1 0 -4.2 0M520.0 643.1a2.1 2.1 0 1 0 4.2 0a2.1 2.1 0 1 0 -4.2 0M533.5 643.1a2.1 2.1 0 1 0 4.2 0a2.1 2.1 0 1 0 -4.2 0M546.9 643.1a2.1 2.1 0 1 0 4.2 0a2.1 2.1 0 1 0 -4.2 0M560.3 643.1a2.1 2.1 0 1 0 4.2 0a2.1 2.1 0 1 0 -4.2 0M573.7 643.1a2.1 2.1 0 1 0 4.2 0a2.1 2.1 0 1 0 -4.2 0M587.2 643.1a2.1 2.1 0 1 0 4.2 0a2.1 2.1 0 1 0 -4.2 0M600.6 643.1a2.1 2.1 0 1 0 4.2 0a2.1 2.1 0 1 0 -4.2 0M614.0 643.1a2.1 2.1 0 1 0 4.2 0a2.1 2.1 0 1 0 -4.2 0M627.5 643.1a2.1 2.1 0 1 0 4.2 0a2.1 2.1 0 1 0 -4.2 0M640.9 643.1a2.1 2.1 0 1 0 4.2 0a2.1 2.1 0 1 0 -4.2 0M654.3 643.1a2.1 2.1 0 1 0 4.2 0a2.1 2.1 0 1 0 -4.2 0M667.7 643.1a2.1 2.1 0 1 0 4.2 0a2.1 2.1 0 1 0 -4.2 0M681.2 643.1a2.1 2.1 0 1 0 4.2 0a2.1 2.1 0 1 0 -4.2 0M694.6 643.1a2.1 2.1 0 1 0 4.2 0a2.1 2.1 0 1 0 -4.2 0M708.0 643.1a2.1 2.1 0 1 0 4.2 0a2.1 2.1 0 1 0 -4.2 0M721.4 643.1a2.1 2.1 0 1 0 4.2 0a2.1 2.1 0 1 0 -4.2 0M734.9 643.1a2.1 2.1 0 1 0 4.2 0a2.1 2.1 0 1 0 -4.2 0M748.3 643.1a2.1 2.1 0 1 0 4.2 0a2.1 2.1 0 1 0 -4.2 0M761.7 643.1a2.1 2.1 0 1 0 4.2 0a2.1 2.1 0 1 0 -4.2 0M775.1 643.1a2.1 2.1 0 1 0 4.2 0a2.1 2.1 0 1 0 -4.2 0M788.6 643.1a2.1 2.1 0 1 0 4.2 0a2.1 2.1 0 1 0 -4.2 0M802.0 643.1a2.1 2.1 0 1 0 4.2 0a2.1 2.1 0 1 0 -4.2 0M815.4 643.1a2.1 2.1 0 1 0 4.2 0a2.1 2.1 0 1 0 -4.2 0M828.9 643.1a2.1 2.1 0 1 0 4.2 0a2.1 2.1 0 1 0 -4.2 0M842.3 643.1a2.1 2.1 0 1 0 4.2 0a2.1 2.1 0 1 0 -4.2 0M452.9 656.6a2.1 2.1 0 1 0 4.2 0a2.1 2.1 0 1 0 -4.2 0M466.3 656.6a2.1 2.1 0 1 0 4.2 0a2.1 2.1 0 1 0 -4.2 0M479.8 656.6a2.1 2.1 0 1 0 4.2 0a2.1 2.1 0 1 0 -4.2 0M493.2 656.6a2.1 2.1 0 1 0 4.2 0a2.1 2.1 0 1 0 -4.2 0M506.6 656.6a2.1 2.1 0 1 0 4.2 0a2.1 2.1 0 1 0 -4.2 0M520.0 656.6a2.1 2.1 0 1 0 4.2 0a2.1 2.1 0 1 0 -4.2 0M533.5 656.6a2.1 2.1 0 1 0 4.2 0a2.1 2.1 0 1 0 -4.2 0M546.9 656.6a2.1 2.1 0 1 0 4.2 0a2.1 2.1 0 1 0 -4.2 0M560.3 656.6a2.1 2.1 0 1 0 4.2 0a2.1 2.1 0 1 0 -4.2 0M573.7 656.6a2.1 2.1 0 1 0 4.2 0a2.1 2.1 0 1 0 -4.2 0M587.2 656.6a2.1 2.1 0 1 0 4.2 0a2.1 2.1 0 1 0 -4.2 0M600.6 656.6a2.1 2.1 0 1 0 4.2 0a2.1 2.1 0 1 0 -4.2 0M614.0 656.6a2.1 2.1 0 1 0 4.2 0a2.1 2.1 0 1 0 -4.2 0M627.5 656.6a2.1 2.1 0 1 0 4.2 0a2.1 2.1 0 1 0 -4.2 0M640.9 656.6a2.1 2.1 0 1 0 4.2 0a2.1 2.1 0 1 0 -4.2 0M654.3 656.6a2.1 2.1 0 1 0 4.2 0a2.1 2.1 0 1 0 -4.2 0M667.7 656.6a2.1 2.1 0 1 0 4.2 0a2.1 2.1 0 1 0 -4.2 0M681.2 656.6a2.1 2.1 0 1 0 4.2 0a2.1 2.1 0 1 0 -4.2 0M694.6 656.6a2.1 2.1 0 1 0 4.2 0a2.1 2.1 0 1 0 -4.2 0M708.0 656.6a2.1 2.1 0 1 0 4.2 0a2.1 2.1 0 1 0 -4.2 0M721.4 656.6a2.1 2.1 0 1 0 4.2 0a2.1 2.1 0 1 0 -4.2 0M734.9 656.6a2.1 2.1 0 1 0 4.2 0a2.1 2.1 0 1 0 -4.2 0M748.3 656.6a2.1 2.1 0 1 0 4.2 0a2.1 2.1 0 1 0 -4.2 0M761.7 656.6a2.1 2.1 0 1 0 4.2 0a2.1 2.1 0 1 0 -4.2 0M775.1 656.6a2.1 2.1 0 1 0 4.2 0a2.1 2.1 0 1 0 -4.2 0M788.6 656.6a2.1 2.1 0 1 0 4.2 0a2.1 2.1 0 1 0 -4.2 0M802.0 656.6a2.1 2.1 0 1 0 4.2 0a2.1 2.1 0 1 0 -4.2 0M815.4 656.6a2.1 2.1 0 1 0 4.2 0a2.1 2.1 0 1 0 -4.2 0M828.9 656.6a2.1 2.1 0 1 0 4.2 0a2.1 2.1 0 1 0 -4.2 0M842.3 656.6a2.1 2.1 0 1 0 4.2 0a2.1 2.1 0 1 0 -4.2 0M452.9 670.0a2.1 2.1 0 1 0 4.2 0a2.1 2.1 0 1 0 -4.2 0M466.3 670.0a2.1 2.1 0 1 0 4.2 0a2.1 2.1 0 1 0 -4.2 0M479.8 670.0a2.1 2.1 0 1 0 4.2 0a2.1 2.1 0 1 0 -4.2 0M493.2 670.0a2.1 2.1 0 1 0 4.2 0a2.1 2.1 0 1 0 -4.2 0M506.6 670.0a2.1 2.1 0 1 0 4.2 0a2.1 2.1 0 1 0 -4.2 0M520.0 670.0a2.1 2.1 0 1 0 4.2 0a2.1 2.1 0 1 0 -4.2 0M533.5 670.0a2.1 2.1 0 1 0 4.2 0a2.1 2.1 0 1 0 -4.2 0M546.9 670.0a2.1 2.1 0 1 0 4.2 0a2.1 2.1 0 1 0 -4.2 0M560.3 670.0a2.1 2.1 0 1 0 4.2 0a2.1 2.1 0 1 0 -4.2 0M573.7 670.0a2.1 2.1 0 1 0 4.2 0a2.1 2.1 0 1 0 -4.2 0M587.2 670.0a2.1 2.1 0 1 0 4.2 0a2.1 2.1 0 1 0 -4.2 0M600.6 670.0a2.1 2.1 0 1 0 4.2 0a2.1 2.1 0 1 0 -4.2 0M614.0 670.0a2.1 2.1 0 1 0 4.2 0a2.1 2.1 0 1 0 -4.2 0M627.5 670.0a2.1 2.1 0 1 0 4.2 0a2.1 2.1 0 1 0 -4.2 0M640.9 670.0a2.1 2.1 0 1 0 4.2 0a2.1 2.1 0 1 0 -4.2 0M654.3 670.0a2.1 2.1 0 1 0 4.2 0a2.1 2.1 0 1 0 -4.2 0M667.7 670.0a2.1 2.1 0 1 0 4.2 0a2.1 2.1 0 1 0 -4.2 0M681.2 670.0a2.1 2.1 0 1 0 4.2 0a2.1 2.1 0 1 0 -4.2 0M694.6 670.0a2.1 2.1 0 1 0 4.2 0a2.1 2.1 0 1 0 -4.2 0M708.0 670.0a2.1 2.1 0 1 0 4.2 0a2.1 2.1 0 1 0 -4.2 0M721.4 670.0a2.1 2.1 0 1 0 4.2 0a2.1 2.1 0 1 0 -4.2 0M734.9 670.0a2.1 2.1 0 1 0 4.2 0a2.1 2.1 0 1 0 -4.2 0M748.3 670.0a2.1 2.1 0 1 0 4.2 0a2.1 2.1 0 1 0 -4.2 0M761.7 670.0a2.1 2.1 0 1 0 4.2 0a2.1 2.1 0 1 0 -4.2 0M775.1 670.0a2.1 2.1 0 1 0 4.2 0a2.1 2.1 0 1 0 -4.2 0M788.6 670.0a2.1 2.1 0 1 0 4.2 0a2.1 2.1 0 1 0 -4.2 0M802.0 670.0a2.1 2.1 0 1 0 4.2 0a2.1 2.1 0 1 0 -4.2 0M815.4 670.0a2.1 2.1 0 1 0 4.2 0a2.1 2.1 0 1 0 -4.2 0M828.9 670.0a2.1 2.1 0 1 0 4.2 0a2.1 2.1 0 1 0 -4.2 0M842.3 670.0a2.1 2.1 0 1 0 4.2 0a2.1 2.1 0 1 0 -4.2 0M452.9 683.5a2.1 2.1 0 1 0 4.2 0a2.1 2.1 0 1 0 -4.2 0M466.3 683.5a2.1 2.1 0 1 0 4.2 0a2.1 2.1 0 1 0 -4.2 0M479.8 683.5a2.1 2.1 0 1 0 4.2 0a2.1 2.1 0 1 0 -4.2 0M493.2 683.5a2.1 2.1 0 1 0 4.2 0a2.1 2.1 0 1 0 -4.2 0M506.6 683.5a2.1 2.1 0 1 0 4.2 0a2.1 2.1 0 1 0 -4.2 0M520.0 683.5a2.1 2.1 0 1 0 4.2 0a2.1 2.1 0 1 0 -4.2 0M533.5 683.5a2.1 2.1 0 1 0 4.2 0a2.1 2.1 0 1 0 -4.2 0M546.9 683.5a2.1 2.1 0 1 0 4.2 0a2.1 2.1 0 1 0 -4.2 0M560.3 683.5a2.1 2.1 0 1 0 4.2 0a2.1 2.1 0 1 0 -4.2 0M573.7 683.5a2.1 2.1 0 1 0 4.2 0a2.1 2.1 0 1 0 -4.2 0M587.2 683.5a2.1 2.1 0 1 0 4.2 0a2.1 2.1 0 1 0 -4.2 0M600.6 683.5a2.1 2.1 0 1 0 4.2 0a2.1 2.1 0 1 0 -4.2 0M614.0 683.5a2.1 2.1 0 1 0 4.2 0a2.1 2.1 0 1 0 -4.2 0M627.5 683.5a2.1 2.1 0 1 0 4.2 0a2.1 2.1 0 1 0 -4.2 0M640.9 683.5a2.1 2.1 0 1 0 4.2 0a2.1 2.1 0 1 0 -4.2 0M654.3 683.5a2.1 2.1 0 1 0 4.2 0a2.1 2.1 0 1 0 -4.2 0M667.7 683.5a2.1 2.1 0 1 0 4.2 0a2.1 2.1 0 1 0 -4.2 0M681.2 683.5a2.1 2.1 0 1 0 4.2 0a2.1 2.1 0 1 0 -4.2 0M694.6 683.5a2.1 2.1 0 1 0 4.2 0a2.1 2.1 0 1 0 -4.2 0M708.0 683.5a2.1 2.1 0 1 0 4.2 0a2.1 2.1 0 1 0 -4.2 0M721.4 683.5a2.1 2.1 0 1 0 4.2 0a2.1 2.1 0 1 0 -4.2 0M734.9 683.5a2.1 2.1 0 1 0 4.2 0a2.1 2.1 0 1 0 -4.2 0M748.3 683.5a2.1 2.1 0 1 0 4.2 0a2.1 2.1 0 1 0 -4.2 0M761.7 683.5a2.1 2.1 0 1 0 4.2 0a2.1 2.1 0 1 0 -4.2 0M775.1 683.5a2.1 2.1 0 1 0 4.2 0a2.1 2.1 0 1 0 -4.2 0M788.6 683.5a2.1 2.1 0 1 0 4.2 0a2.1 2.1 0 1 0 -4.2 0M802.0 683.5a2.1 2.1 0 1 0 4.2 0a2.1 2.1 0 1 0 -4.2 0M815.4 683.5a2.1 2.1 0 1 0 4.2 0a2.1 2.1 0 1 0 -4.2 0M828.9 683.5a2.1 2.1 0 1 0 4.2 0a2.1 2.1 0 1 0 -4.2 0M842.3 683.5a2.1 2.1 0 1 0 4.2 0a2.1 2.1 0 1 0 -4.2 0M452.9 696.9a2.1 2.1 0 1 0 4.2 0a2.1 2.1 0 1 0 -4.2 0M466.3 696.9a2.1 2.1 0 1 0 4.2 0a2.1 2.1 0 1 0 -4.2 0M479.8 696.9a2.1 2.1 0 1 0 4.2 0a2.1 2.1 0 1 0 -4.2 0M493.2 696.9a2.1 2.1 0 1 0 4.2 0a2.1 2.1 0 1 0 -4.2 0M506.6 696.9a2.1 2.1 0 1 0 4.2 0a2.1 2.1 0 1 0 -4.2 0M520.0 696.9a2.1 2.1 0 1 0 4.2 0a2.1 2.1 0 1 0 -4.2 0M533.5 696.9a2.1 2.1 0 1 0 4.2 0a2.1 2.1 0 1 0 -4.2 0M546.9 696.9a2.1 2.1 0 1 0 4.2 0a2.1 2.1 0 1 0 -4.2 0M560.3 696.9a2.1 2.1 0 1 0 4.2 0a2.1 2.1 0 1 0 -4.2 0M573.7 696.9a2.1 2.1 0 1 0 4.2 0a2.1 2.1 0 1 0 -4.2 0M587.2 696.9a2.1 2.1 0 1 0 4.2 0a2.1 2.1 0 1 0 -4.2 0M600.6 696.9a2.1 2.1 0 1 0 4.2 0a2.1 2.1 0 1 0 -4.2 0M614.0 696.9a2.1 2.1 0 1 0 4.2 0a2.1 2.1 0 1 0 -4.2 0M627.5 696.9a2.1 2.1 0 1 0 4.2 0a2.1 2.1 0 1 0 -4.2 0M640.9 696.9a2.1 2.1 0 1 0 4.2 0a2.1 2.1 0 1 0 -4.2 0M654.3 696.9a2.1 2.1 0 1 0 4.2 0a2.1 2.1 0 1 0 -4.2 0M667.7 696.9a2.1 2.1 0 1 0 4.2 0a2.1 2.1 0 1 0 -4.2 0M681.2 696.9a2.1 2.1 0 1 0 4.2 0a2.1 2.1 0 1 0 -4.2 0M694.6 696.9a2.1 2.1 0 1 0 4.2 0a2.1 2.1 0 1 0 -4.2 0M708.0 696.9a2.1 2.1 0 1 0 4.2 0a2.1 2.1 0 1 0 -4.2 0M721.4 696.9a2.1 2.1 0 1 0 4.2 0a2.1 2.1 0 1 0 -4.2 0M734.9 696.9a2.1 2.1 0 1 0 4.2 0a2.1 2.1 0 1 0 -4.2 0M748.3 696.9a2.1 2.1 0 1 0 4.2 0a2.1 2.1 0 1 0 -4.2 0M761.7 696.9a2.1 2.1 0 1 0 4.2 0a2.1 2.1 0 1 0 -4.2 0M775.1 696.9a2.1 2.1 0 1 0 4.2 0a2.1 2.1 0 1 0 -4.2 0M788.6 696.9a2.1 2.1 0 1 0 4.2 0a2.1 2.1 0 1 0 -4.2 0M802.0 696.9a2.1 2.1 0 1 0 4.2 0a2.1 2.1 0 1 0 -4.2 0M815.4 696.9a2.1 2.1 0 1 0 4.2 0a2.1 2.1 0 1 0 -4.2 0M828.9 696.9a2.1 2.1 0 1 0 4.2 0a2.1 2.1 0 1 0 -4.2 0M842.3 696.9a2.1 2.1 0 1 0 4.2 0a2.1 2.1 0 1 0 -4.2 0M452.9 737.1a2.1 2.1 0 1 0 4.2 0a2.1 2.1 0 1 0 -4.2 0M466.3 737.1a2.1 2.1 0 1 0 4.2 0a2.1 2.1 0 1 0 -4.2 0M479.8 737.1a2.1 2.1 0 1 0 4.2 0a2.1 2.1 0 1 0 -4.2 0M493.2 737.1a2.1 2.1 0 1 0 4.2 0a2.1 2.1 0 1 0 -4.2 0M506.6 737.1a2.1 2.1 0 1 0 4.2 0a2.1 2.1 0 1 0 -4.2 0M520.0 737.1a2.1 2.1 0 1 0 4.2 0a2.1 2.1 0 1 0 -4.2 0M533.5 737.1a2.1 2.1 0 1 0 4.2 0a2.1 2.1 0 1 0 -4.2 0M546.9 737.1a2.1 2.1 0 1 0 4.2 0a2.1 2.1 0 1 0 -4.2 0M560.3 737.1a2.1 2.1 0 1 0 4.2 0a2.1 2.1 0 1 0 -4.2 0M573.7 737.1a2.1 2.1 0 1 0 4.2 0a2.1 2.1 0 1 0 -4.2 0M587.2 737.1a2.1 2.1 0 1 0 4.2 0a2.1 2.1 0 1 0 -4.2 0M600.6 737.1a2.1 2.1 0 1 0 4.2 0a2.1 2.1 0 1 0 -4.2 0M614.0 737.1a2.1 2.1 0 1 0 4.2 0a2.1 2.1 0 1 0 -4.2 0M627.5 737.1a2.1 2.1 0 1 0 4.2 0a2.1 2.1 0 1 0 -4.2 0M640.9 737.1a2.1 2.1 0 1 0 4.2 0a2.1 2.1 0 1 0 -4.2 0M654.3 737.1a2.1 2.1 0 1 0 4.2 0a2.1 2.1 0 1 0 -4.2 0M667.7 737.1a2.1 2.1 0 1 0 4.2 0a2.1 2.1 0 1 0 -4.2 0M681.2 737.1a2.1 2.1 0 1 0 4.2 0a2.1 2.1 0 1 0 -4.2 0M694.6 737.1a2.1 2.1 0 1 0 4.2 0a2.1 2.1 0 1 0 -4.2 0M708.0 737.1a2.1 2.1 0 1 0 4.2 0a2.1 2.1 0 1 0 -4.2 0M721.4 737.1a2.1 2.1 0 1 0 4.2 0a2.1 2.1 0 1 0 -4.2 0M734.9 737.1a2.1 2.1 0 1 0 4.2 0a2.1 2.1 0 1 0 -4.2 0M748.3 737.1a2.1 2.1 0 1 0 4.2 0a2.1 2.1 0 1 0 -4.2 0M761.7 737.1a2.1 2.1 0 1 0 4.2 0a2.1 2.1 0 1 0 -4.2 0M775.1 737.1a2.1 2.1 0 1 0 4.2 0a2.1 2.1 0 1 0 -4.2 0M788.6 737.1a2.1 2.1 0 1 0 4.2 0a2.1 2.1 0 1 0 -4.2 0M802.0 737.1a2.1 2.1 0 1 0 4.2 0a2.1 2.1 0 1 0 -4.2 0M815.4 737.1a2.1 2.1 0 1 0 4.2 0a2.1 2.1 0 1 0 -4.2 0M828.9 737.1a2.1 2.1 0 1 0 4.2 0a2.1 2.1 0 1 0 -4.2 0M842.3 737.1a2.1 2.1 0 1 0 4.2 0a2.1 2.1 0 1 0 -4.2 0M452.9 750.6a2.1 2.1 0 1 0 4.2 0a2.1 2.1 0 1 0 -4.2 0M466.3 750.6a2.1 2.1 0 1 0 4.2 0a2.1 2.1 0 1 0 -4.2 0M479.8 750.6a2.1 2.1 0 1 0 4.2 0a2.1 2.1 0 1 0 -4.2 0M493.2 750.6a2.1 2.1 0 1 0 4.2 0a2.1 2.1 0 1 0 -4.2 0M506.6 750.6a2.1 2.1 0 1 0 4.2 0a2.1 2.1 0 1 0 -4.2 0M520.0 750.6a2.1 2.1 0 1 0 4.2 0a2.1 2.1 0 1 0 -4.2 0M533.5 750.6a2.1 2.1 0 1 0 4.2 0a2.1 2.1 0 1 0 -4.2 0M546.9 750.6a2.1 2.1 0 1 0 4.2 0a2.1 2.1 0 1 0 -4.2 0M560.3 750.6a2.1 2.1 0 1 0 4.2 0a2.1 2.1 0 1 0 -4.2 0M573.7 750.6a2.1 2.1 0 1 0 4.2 0a2.1 2.1 0 1 0 -4.2 0M587.2 750.6a2.1 2.1 0 1 0 4.2 0a2.1 2.1 0 1 0 -4.2 0M600.6 750.6a2.1 2.1 0 1 0 4.2 0a2.1 2.1 0 1 0 -4.2 0M614.0 750.6a2.1 2.1 0 1 0 4.2 0a2.1 2.1 0 1 0 -4.2 0M627.5 750.6a2.1 2.1 0 1 0 4.2 0a2.1 2.1 0 1 0 -4.2 0M640.9 750.6a2.1 2.1 0 1 0 4.2 0a2.1 2.1 0 1 0 -4.2 0M654.3 750.6a2.1 2.1 0 1 0 4.2 0a2.1 2.1 0 1 0 -4.2 0M667.7 750.6a2.1 2.1 0 1 0 4.2 0a2.1 2.1 0 1 0 -4.2 0M681.2 750.6a2.1 2.1 0 1 0 4.2 0a2.1 2.1 0 1 0 -4.2 0M694.6 750.6a2.1 2.1 0 1 0 4.2 0a2.1 2.1 0 1 0 -4.2 0M708.0 750.6a2.1 2.1 0 1 0 4.2 0a2.1 2.1 0 1 0 -4.2 0M721.4 750.6a2.1 2.1 0 1 0 4.2 0a2.1 2.1 0 1 0 -4.2 0M734.9 750.6a2.1 2.1 0 1 0 4.2 0a2.1 2.1 0 1 0 -4.2 0M748.3 750.6a2.1 2.1 0 1 0 4.2 0a2.1 2.1 0 1 0 -4.2 0M761.7 750.6a2.1 2.1 0 1 0 4.2 0a2.1 2.1 0 1 0 -4.2 0M775.1 750.6a2.1 2.1 0 1 0 4.2 0a2.1 2.1 0 1 0 -4.2 0M788.6 750.6a2.1 2.1 0 1 0 4.2 0a2.1 2.1 0 1 0 -4.2 0M802.0 750.6a2.1 2.1 0 1 0 4.2 0a2.1 2.1 0 1 0 -4.2 0M815.4 750.6a2.1 2.1 0 1 0 4.2 0a2.1 2.1 0 1 0 -4.2 0M828.9 750.6a2.1 2.1 0 1 0 4.2 0a2.1 2.1 0 1 0 -4.2 0M842.3 750.6a2.1 2.1 0 1 0 4.2 0a2.1 2.1 0 1 0 -4.2 0" fill="#2d2d2d"/>
<g font-family="'Liberation Sans',sans-serif" fill="#4c4c4c">
<text transform="translate(457.5 536.7) rotate(-90)" font-size="8" text-anchor="middle">1</text>
<text transform="translate(457.5 708.8) rotate(-90)" font-size="8" text-anchor="middle">1</text>
<text transform="translate(470.9 536.7) rotate(-90)" font-size="8" text-anchor="middle">2</text>
<text transform="translate(470.9 708.8) rotate(-90)" font-size="8" text-anchor="middle">2</text>
<text transform="translate(484.4 536.7) rotate(-90)" font-size="8" text-anchor="middle">3</text>
<text transform="translate(484.4 708.8) rotate(-90)" font-size="8" text-anchor="middle">3</text>
<text transform="translate(497.8 536.7) rotate(-90)" font-size="8" text-anchor="middle">4</text>
<text transform="translate(497.8 708.8) rotate(-90)" font-size="8" text-anchor="middle">4</text>
<text transform="translate(511.2 536.7) rotate(-90)" font-size="8" text-anchor="middle">5</text>
<text transform="translate(511.2 708.8) rotate(-90)" font-size="8" text-anchor="middle">5</text>
<text transform="translate(524.6 536.7) rotate(-90)" font-size="8" text-anchor="middle">6</text>
<text transform="translate(524.6 708.8) rotate(-90)" font-size="8" text-anchor="middle">6</text>
<text transform="translate(538.1 536.7) rotate(-90)" font-size="8" text-anchor="middle">7</text>
<text transform="translate(538.1 708.8) rotate(-90)" font-size="8" text-anchor="middle">7</text>
<text transform="translate(551.5 536.7) rotate(-90)" font-size="8" text-anchor="middle">8</text>
<text transform="translate(551.5 708.8) rotate(-90)" font-size="8" text-anchor="middle">8</text>
<text transform="translate(564.9 536.7) rotate(-90)" font-size="8" text-anchor="middle">9</text>
<text transform="translate(564.9 708.8) rotate(-90)" font-size="8" text-anchor="middle">9</text>
<text transform="translate(578.3 536.7) rotate(-90)" font-size="8" text-anchor="middle">10</text>
<text transform="translate(578.3 708.8) rotate(-90)" font-size="8" text-anchor="middle">10</text>
<text transform="translate(591.8 536.7) rotate(-90)" font-size="8" text-anchor="middle">11</text>
<text transform="translate(591.8 708.8) rotate(-90)" font-size="8" text-anchor="middle">11</text>
<text transform="translate(605.2 536.7) rotate(-90)" font-size="8" text-anchor="middle">12</text>
<text transform="translate(605.2 708.8) rotate(-90)" font-size="8" text-anchor="middle">12</text>
<text transform="translate(618.6 536.7) rotate(-90)" font-size="8" text-anchor="middle">13</text>
<text transform="translate(618.6 708.8) rotate(-90)" font-size="8" text-anchor="middle">13</text>
<text transform="translate(632.1 536.7) rotate(-90)" font-size="8" text-anchor="middle">14</text>
<text transform="translate(632.1 708.8) rotate(-90)" font-size="8" text-anchor="middle">14</text>
<text transform="translate(645.5 536.7) rotate(-90)" font-size="8" text-anchor="middle">15</text>
<text transform="translate(645.5 708.8) rotate(-90)" font-size="8" text-anchor="middle">15</text>
<text transform="translate(658.9 536.7) rotate(-90)" font-size="8" text-anchor="middle">16</text>
<text transform="translate(658.9 708.8) rotate(-90)" font-size="8" text-anchor="middle">16</text>
<text transform="translate(672.3 536.7) rotate(-90)" font-size="8" text-anchor="middle">17</text>
<text transform="translate(672.3 708.8) rotate(-90)" font-size="8" text-anchor="middle">17</text>
<text transform="translate(685.8 536.7) rotate(-90)" font-size="8" text-anchor="middle">18</text>
<text transform="translate(685.8 708.8) rotate(-90)" font-size="8" text-anchor="middle">18</text>
<text transform="translate(699.2 536.7) rotate(-90)" font-size="8" text-anchor="middle">19</text>
<text transform="translate(699.2 708.8) rotate(-90)" font-size="8" text-anchor="middle">19</text>
<text transform="translate(712.6 536.7) rotate(-90)" font-size="8" text-anchor="middle">20</text>
<text transform="translate(712.6 708.8) rotate(-90)" font-size="8" text-anchor="middle">20</text>
<text transform="translate(726.0 536.7) rotate(-90)" font-size="8" text-anchor="middle">21</text>
<text transform="translate(726.0 708.8) rotate(-90)" font-size="8" text-anchor="middle">21</text>
<text transform="translate(739.5 536.7) rotate(-90)" font-size="8" text-anchor="middle">22</text>
<text transform="translate(739.5 708.8) rotate(-90)" font-size="8" text-anchor="middle">22</text>
<text transform="translate(752.9 536.7) rotate(-90)" font-size="8" text-anchor="middle">23</text>
<text transform="translate(752.9 708.8) rotate(-90)" font-size="8" text-anchor="middle">23</text>
<text transform="translate(766.3 536.7) rotate(-90)" font-size="8" text-anchor="middle">24</text>
<text transform="translate(766.3 708.8) rotate(-90)" font-size="8" text-anchor="middle">24</text>
<text transform="translate(779.7 536.7) rotate(-90)" font-size="8" text-anchor="middle">25</text>
<text transform="translate(779.7 708.8) rotate(-90)" font-size="8" text-anchor="middle">25</text>
<text transform="translate(793.2 536.7) rotate(-90)" font-size="8" text-anchor="middle">26</text>
<text transform="translate(793.2 708.8) rotate(-90)" font-size="8" text-anchor="middle">26</text>
<text transform="translate(806.6 536.7) rotate(-90)" font-size="8" text-anchor="middle">27</text>
<text transform="translate(806.6 708.8) rotate(-90)" font-size="8" text-anchor="middle">27</text>
<text transform="translate(820.0 536.7) rotate(-90)" font-size="8" text-anchor="middle">28</text>
<text transform="translate(820.0 708.8) rotate(-90)" font-size="8" text-anchor="middle">28</text>
<text transform="translate(833.5 536.7) rotate(-90)" font-size="8" text-anchor="middle">29</text>
<text transform="translate(833.5 708.8) rotate(-90)" font-size="8" text-anchor="middle">29</text>
<text transform="translate(846.9 536.7) rotate(-90)" font-size="8" text-anchor="middle">30</text>
<text transform="translate(846.9 708.8) rotate(-90)" font-size="8" text-anchor="middle">30</text>
<text transform="translate(443.6 549.1) rotate(-90)" font-size="12" text-anchor="middle" fill="#666">j</text>
<text transform="translate(443.6 562.6) rotate(-90)" font-size="12" text-anchor="middle" fill="#666">i</text>
<text transform="translate(443.6 576.1) rotate(-90)" font-size="12" text-anchor="middle" fill="#666">h</text>
<text transform="translate(443.6 589.6) rotate(-90)" font-size="12" text-anchor="middle" fill="#666">g</text>
<text transform="translate(443.6 603.0) rotate(-90)" font-size="12" text-anchor="middle" fill="#666">f</text>
<text transform="translate(443.6 643.1) rotate(-90)" font-size="12" text-anchor="middle" fill="#666">e</text>
<text transform="translate(443.6 656.6) rotate(-90)" font-size="12" text-anchor="middle" fill="#666">d</text>
<text transform="translate(443.6 670.0) rotate(-90)" font-size="12" text-anchor="middle" fill="#666">c</text>
<text transform="translate(443.6 683.5) rotate(-90)" font-size="12" text-anchor="middle" fill="#666">b</text>
<text transform="translate(443.6 696.9) rotate(-90)" font-size="12" text-anchor="middle" fill="#666">a</text>
<text transform="translate(861.6 549.1) rotate(-90)" font-size="12" text-anchor="middle" fill="#666">j</text>
<text transform="translate(861.6 562.6) rotate(-90)" font-size="12" text-anchor="middle" fill="#666">i</text>
<text transform="translate(861.6 576.1) rotate(-90)" font-size="12" text-anchor="middle" fill="#666">h</text>
<text transform="translate(861.6 589.6) rotate(-90)" font-size="12" text-anchor="middle" fill="#666">g</text>
<text transform="translate(861.6 603.0) rotate(-90)" font-size="12" text-anchor="middle" fill="#666">f</text>
<text transform="translate(861.6 643.1) rotate(-90)" font-size="12" text-anchor="middle" fill="#666">e</text>
<text transform="translate(861.6 656.6) rotate(-90)" font-size="12" text-anchor="middle" fill="#666">d</text>
<text transform="translate(861.6 670.0) rotate(-90)" font-size="12" text-anchor="middle" fill="#666">c</text>
<text transform="translate(861.6 683.5) rotate(-90)" font-size="12" text-anchor="middle" fill="#666">b</text>
<text transform="translate(861.6 696.9) rotate(-90)" font-size="12" text-anchor="middle" fill="#666">a</text>
</g>
<rect x="437.9" y="487.1" width="1" height="7.5" fill="#444"/><rect x="437.9" y="727.8" width="1" height="7.3" fill="#444"/>
<path d="M434.7 514.7 H442.1 M438.4 511.00000000000006 V518.4000000000001" stroke="#bb1e22" stroke-width="1" fill="none"/>
<path d="M434.7 755.0 H442.1 M438.4 751.3 V758.7" stroke="#bb1e22" stroke-width="1" fill="none"/>
<rect x="858.5" y="487.1" width="1" height="7.5" fill="#444"/><rect x="858.5" y="727.8" width="1" height="7.3" fill="#444"/>
<path d="M855.3 514.7 H862.7 M859.0 511.00000000000006 V518.4000000000001" stroke="#bb1e22" stroke-width="1" fill="none"/>
<path d="M855.3 755.0 H862.7 M859.0 751.3 V758.7" stroke="#bb1e22" stroke-width="1" fill="none"/>
<path d="M642.7 578 V589.4 M656.5 578 V589.4" stroke="#8e8e8e" stroke-width="2.4" stroke-linecap="round" fill="none"/>
<ellipse cx="649.55" cy="566.75" rx="14.35" ry="12.35" fill="#e4e6b6" stroke="#bf6226" stroke-width="2"/>
<path d="M656.1 558.10 H644.1 a1.72 1.72 0 0 0 0 3.44 H656 a1.72 1.72 0 0 1 0 3.44 H644.1 a1.72 1.72 0 0 0 0 3.44 H656 a1.72 1.72 0 0 1 0 3.44 H644.1 a1.72 1.72 0 0 0 0 3.44 H656" fill="none" stroke="#c0622a" stroke-width="1.35"/>
<circle cx="639.1" cy="566.9" r="0.9" fill="#d6d6aa"/><circle cx="660.2" cy="566.9" r="0.9" fill="#d6d6aa"/>
<path d="M656.4 602.9 H710.1" stroke="#8c8c8c" stroke-width="2.2" fill="none"/>
<circle cx="656.4" cy="602.9" r="1.9" fill="#8c8c8c" stroke="#4a4a4a" stroke-width="0.9"/><circle cx="710.1" cy="602.9" r="1.9" fill="#8c8c8c" stroke="#4a4a4a" stroke-width="0.9"/>
<path transform="rotate(-90 683.1 602.9)" d="M683.30 582.60 C684.30 584.80 685.70 586.30 687.30 587.60 C689.20 589.10 690.20 589.90 690.20 591.50 V593.00 C690.20 595.00 688.15 594.80 688.15 597.00 V608.40 C688.15 610.60 690.20 610.40 690.20 612.40 V613.90 C690.20 615.50 689.20 616.30 687.30 617.80 C685.70 619.10 684.30 620.60 683.30 622.80 C682.30 620.60 680.90 619.10 679.30 617.80 C677.40 616.30 676.40 615.50 676.40 613.90 V612.40 C676.40 610.40 678.45 610.60 678.45 608.40 V597.00 C678.45 594.80 676.40 595.00 676.40 593.00 V591.50 C676.40 589.90 677.40 589.10 679.30 587.60 C680.90 586.30 682.30 584.80 683.30 582.60 Z" fill="#e3bf86"/>
<rect x="670.1" y="596.1" width="3.2" height="13.6" fill="#8e4a16"/><rect x="677.1" y="598" width="3.1" height="9.9" fill="#050505"/><rect x="683.9" y="598" width="3.2" height="9.9" fill="#ff8c00"/><rect x="694.6" y="596.1" width="1.3" height="6.8" fill="#ddd63a"/><rect x="694.6" y="602.9" width="1.3" height="6.8" fill="#7a7230"/>
<path d="M710.05 493.8 V590.3" stroke="#7d3a9c" stroke-width="3.8" stroke-linecap="butt" fill="none" opacity="0.97"/>
<path d="M777.1 593 V603.6 M786.7 593 L790.9 601 V603.6" stroke="#8a8a8a" stroke-width="2.3" stroke-linecap="round" stroke-linejoin="round" fill="none"/>
<path d="M773 574 A9.3 9.3 0 0 1 791.6 574 V586 H793 V590.6 Q793 595 782.6 595 Q773 595 773 590.4 Z" fill="#7e2020"/>
<path d="M773.2 590 Q782.6 594.6 792.8 589.4" fill="none" stroke="#a64444" stroke-width="0.7"/>
<path d="M773.3 574 V590" stroke="#9a2e2e" stroke-width="0.6" fill="none"/>
<path d="M629.2 391.5 L642.8 549.2" stroke="#f28200" stroke-width="3.1" stroke-linecap="round" fill="none"/>
<path d="M642.6 391.5 L655.8 495.2" stroke="#cccccc" stroke-width="3.8" stroke-linecap="round" fill="none"/><path d="M642.6 391.5 L655.8 495.2" stroke="#ffffff" stroke-width="2.5" stroke-linecap="round" fill="none"/>
<path d="M722.7 391.5 L656.2 549" stroke="#34383a" stroke-width="3.4" stroke-linecap="round" fill="none"/>
<path d="M790.6 495.6 V548.7" stroke="#3d8fe2" stroke-width="2.7" stroke-linecap="round" fill="none"/>
<path d="M790.60 501.70 C791.69 503.90 793.21 505.40 794.95 506.70 C797.01 508.20 798.10 509.00 798.10 510.60 V512.10 C798.10 514.10 796.30 513.90 796.30 516.10 V528.60 C796.30 530.80 798.10 530.60 798.10 532.60 V534.10 C798.10 535.70 797.01 536.50 794.95 538.00 C793.21 539.30 791.69 540.80 790.60 543.00 C789.51 540.80 787.99 539.30 786.25 538.00 C784.19 536.50 783.10 535.70 783.10 534.10 V532.60 C783.10 530.60 784.90 530.80 784.90 528.60 V516.10 C784.90 513.90 783.10 514.10 783.10 512.10 V510.60 C783.10 509.00 784.19 508.20 786.25 506.70 C787.99 505.40 789.51 503.90 790.60 501.70 Z" fill="#deb676" stroke="#3d8fe2" stroke-width="2.1" stroke-linejoin="round"/>
<rect x="784.1" y="509.1" width="13" height="3.5" fill="#8e4a16"/><rect x="785.8" y="516.5" width="9.7" height="2.9" fill="#050505"/><rect x="785.8" y="523.2" width="9.7" height="3.3" fill="#f00"/><rect x="784.3" y="534.1" width="6.3" height="1.1" fill="#857a25"/><rect x="790.6" y="534.1" width="6.3" height="1.1" fill="#ddd63a"/>
<path d="M722.9 136.6 L804 549.2" stroke="#3eb540" stroke-width="3" stroke-linecap="round" fill="none"/>
</svg>


<!-- ============ CODE PANEL ============ -->
<div class="abs" style="left:937px;top:39px;width:771px;height:794px;background:#f0f1f4;border-left:1px solid #d9dee8"></div>
<div class="abs" style="left:938px;top:87px;width:770px;height:2px;background:#dde2ea"></div>
<!-- palette -->
<div class="abs" id="cats" style="left:938px;top:88px;width:250px;height:80px;background:#fff"></div>
<div class="abs" style="left:938.5px;top:113px;width:124.5px;height:24.7px;border-radius:12.5px;background:#e9eef3"></div>
<svg class="abs" style="left:938px;top:88px" width="250" height="80" viewBox="938 88 250 80" font-family="'Liberation Sans','Noto Sans CJK TC',sans-serif">
<circle cx="950" cy="100" r="7.7" fill="#4c97ff" stroke="#3f82e0" stroke-width="1"/>
<text x="967" y="105.7" font-size="13" font-weight="350" fill="#4d5870">輸出</text>
<circle cx="950" cy="125" r="7.7" fill="#9966ff" stroke="#7d52d6" stroke-width="1"/>
<text x="967" y="130.7" font-size="13" font-weight="350" fill="#4d5870">輸入</text>
<circle cx="950" cy="150" r="7.7" fill="#8c8c8c" stroke="#7d7d7d" stroke-width="1"/>
<text x="967" y="155.7" font-size="13" font-weight="350" fill="#4d5870">標記符號</text>
<circle cx="1075" cy="100" r="7.7" fill="#ffab19" stroke="#e39612" stroke-width="1"/>
<text x="1091.7" y="105.7" font-size="13" font-weight="350" fill="#4d5870">控制</text>
<circle cx="1075" cy="125" r="7.7" fill="#40bf4a" stroke="#37a540" stroke-width="1"/>
<text x="1091.7" y="130.7" font-size="13" font-weight="350" fill="#4d5870">數學</text>
<circle cx="1075" cy="150" r="7.7" fill="#d65cd6" stroke="#bd48bd" stroke-width="1"/>
<text x="1091.7" y="155.7" font-size="13" font-weight="350" fill="#4d5870">變數</text>
</svg>
<div class="abs" id="flyout" style="left:938px;top:168px;width:248px;height:510px;background:#f9f9f9;overflow:hidden"></div>
<svg class="abs" style="left:938px;top:168px" width="248" height="510" viewBox="938 168 248 510" font-family="'Liberation Sans','Noto Sans CJK TC',sans-serif">
<rect x="946.9" y="178.9" width="134.3" height="30.0" rx="15.0" fill="#9966ff" stroke="#7f55e0" stroke-width="1"/>
<text x="956.4" y="198.7" font-size="11.6" font-weight="600" fill="#fff" text-anchor="start" textLength="71.0" lengthAdjust="spacing">讀取數位接腳</text>
<rect x="1034.1" y="182.2" width="38.0" height="23.6" rx="3" fill="#9966ff" stroke="#7f55e0" stroke-width="1"/>
<text x="1042.6" y="198.7" font-size="12" font-weight="600" fill="#fff" text-anchor="start">0</text>
<path d="M1056.15 193.55 H1061.75 L1058.95 196.67 Z" fill="#fff" stroke="#fff" stroke-width="2.30" stroke-linejoin="round"/>
<rect x="946.9" y="217.9" width="142.2" height="30.0" rx="15.0" fill="#9966ff" stroke="#7f55e0" stroke-width="1"/>
<text x="956.4" y="237.7" font-size="11.6" font-weight="600" fill="#fff" text-anchor="start" textLength="71.0" lengthAdjust="spacing">讀取類比接腳</text>
<rect x="1034.1" y="221.2" width="45.8" height="23.6" rx="3" fill="#9966ff" stroke="#7f55e0" stroke-width="1"/>
<text x="1042.3" y="237.7" font-size="12" font-weight="600" fill="#fff" text-anchor="start" textLength="14.8" lengthAdjust="spacing">A0</text>
<path d="M1064.05 232.55 H1069.65 L1066.85 235.67 Z" fill="#fff" stroke="#fff" stroke-width="2.30" stroke-linejoin="round"/>
<rect x="946.9" y="257.0" width="212.3" height="30.0" rx="15.0" fill="#9966ff" stroke="#7f55e0" stroke-width="1"/>
<text x="956.4" y="276.8" font-size="11.6" font-weight="600" fill="#fff" text-anchor="start" textLength="47.2" lengthAdjust="spacing">讀取接腳</text>
<rect x="1010.2" y="260.3" width="37.9" height="23.6" rx="3" fill="#9966ff" stroke="#7f55e0" stroke-width="1"/>
<text x="1018.6" y="276.8" font-size="12" font-weight="600" fill="#fff" text-anchor="start">0</text>
<path d="M1032.15 271.65 H1037.75 L1034.95 274.76 Z" fill="#fff" stroke="#fff" stroke-width="2.30" stroke-linejoin="round"/>
<text x="1055.0" y="276.8" font-size="11.6" font-weight="600" fill="#fff" text-anchor="start" textLength="95.0" lengthAdjust="spacing">上伺服馬達的角度</text>
<rect x="946.9" y="295.9" width="114.0" height="30.0" rx="15.0" fill="#9966ff" stroke="#7f55e0" stroke-width="1"/>
<text x="956.4" y="315.7" font-size="11.6" font-weight="600" fill="#fff" text-anchor="start" textLength="95.3" lengthAdjust="spacing">可用的序列字元數</text>
<rect x="946.9" y="334.9" width="77.9" height="30.0" rx="15.0" fill="#9966ff" stroke="#7f55e0" stroke-width="1"/>
<text x="956.4" y="354.7" font-size="11.6" font-weight="600" fill="#fff" text-anchor="start" textLength="59.3" lengthAdjust="spacing">從序列讀取</text>
<rect x="946.9" y="374.0" width="352.6" height="30.0" rx="15.0" fill="#9966ff" stroke="#7f55e0" stroke-width="1"/>
<text x="956.4" y="393.8" font-size="11.6" font-weight="600" fill="#fff" text-anchor="start" textLength="47.4" lengthAdjust="spacing">讀取單元</text>
<rect x="1010.2" y="377.3" width="55.0" height="23.6" rx="3" fill="#9966ff" stroke="#7f55e0" stroke-width="1"/>
<text x="1018.6" y="393.8" font-size="11.6" font-weight="600" fill="#fff" text-anchor="start" textLength="23.6" lengthAdjust="spacing">公分</text>
<path d="M1049.25 388.65 H1054.85 L1052.05 391.76 Z" fill="#fff" stroke="#fff" stroke-width="2.30" stroke-linejoin="round"/>
<text x="1072.1" y="393.8" font-size="11.6" font-weight="600" fill="#fff" text-anchor="start" textLength="71.0" lengthAdjust="spacing">上觸發器接腳</text>
<rect x="1149.5" y="377.3" width="38.0" height="23.6" rx="3" fill="#9966ff" stroke="#7f55e0" stroke-width="1"/>
<text x="1157.6" y="393.8" font-size="12" font-weight="600" fill="#fff" text-anchor="start">0</text>
<path d="M1171.45 388.65 H1177.05 L1174.25 391.76 Z" fill="#fff" stroke="#fff" stroke-width="2.30" stroke-linejoin="round"/>
<text x="1194.0" y="393.8" font-size="11.6" font-weight="600" fill="#fff" text-anchor="start">上的超音波距離感應器</text>
<rect x="946.9" y="413.1" width="352.6" height="30.0" rx="15.0" fill="#9966ff" stroke="#7f55e0" stroke-width="1"/>
<text x="956.4" y="432.9" font-size="11.6" font-weight="600" fill="#fff" text-anchor="start" textLength="47.4" lengthAdjust="spacing">讀取單元</text>
<rect x="1010.2" y="416.4" width="44.3" height="23.6" rx="3" fill="#9966ff" stroke="#7f55e0" stroke-width="1"/>
<text x="1018.3" y="432.9" font-size="12" font-weight="600" fill="#fff" text-anchor="start" textLength="13.1" lengthAdjust="spacing">°C</text>
<path d="M1038.75 427.75 H1044.35 L1041.55 430.87 Z" fill="#fff" stroke="#fff" stroke-width="2.30" stroke-linejoin="round"/>
<text x="1061.4" y="432.9" font-size="11.6" font-weight="600" fill="#fff" text-anchor="start" textLength="35.5" lengthAdjust="spacing">上接腳</text>
<rect x="1103.1" y="416.4" width="46.1" height="23.6" rx="3" fill="#9966ff" stroke="#7f55e0" stroke-width="1"/>
<text x="1111.1" y="432.9" font-size="12" font-weight="600" fill="#fff" text-anchor="start" textLength="14.9" lengthAdjust="spacing">A0</text>
<path d="M1133.05 427.75 H1138.65 L1135.85 430.87 Z" fill="#fff" stroke="#fff" stroke-width="2.30" stroke-linejoin="round"/>
<text x="1155.7" y="432.9" font-size="11.6" font-weight="600" fill="#fff" text-anchor="start" textLength="71.0" lengthAdjust="spacing">的溫度感應器</text>
</svg>
<div class="abs" style="left:1186px;top:168px;width:2px;height:510px;background:#f9f9f9"></div>
<!-- workspace -->
<div class="abs" id="ws" style="left:1189px;top:89px;width:518px;height:589px;background:#f9f9f9;overflow:hidden"></div>
<svg class="abs" style="left:1189px;top:89px" width="518" height="590" viewBox="1189 89 518 590" font-family="'Liberation Sans','Noto Sans CJK TC',sans-serif">
<path d="M1204.40 276.10 a3.60 3.60 0 0 1 3.60 -3.60 h7.20 c 1.80,0.00 2.70,0.90 3.60,1.80 l 3.60,3.60 c 0.90,0.90 1.80,1.80 3.60,1.80 h 10.80 c 1.80,0.00 2.70,-0.90 3.60,-1.80 l 3.60,-3.60 c 0.90,-0.90 1.80,-1.80 3.60,-1.80 H1628.00 a3.60 3.60 0 0 1 3.60 3.60 V319.60 a3.60 3.60 0 0 1 -3.60 3.60 H1247.60 c -1.80,0.00 -2.70,0.90 -3.60,1.80 l -3.60,3.60 c -0.90,0.90 -1.80,1.80 -3.60,1.80 h -10.80 c -1.80,0.00 -2.70,-0.90 -3.60,-1.80 l -3.60,-3.60 c -0.90,-0.90 -1.80,-1.80 -3.60,-1.80 h-7.20 a3.60 3.60 0 0 1 -3.60 -3.60 Z" fill="#4c97ff" stroke="#397bdc" stroke-width="1"/>
<text x="1211.7" y="303.7" font-size="13.5" font-weight="500" fill="#fff" text-anchor="start" textLength="43.6" lengthAdjust="spacing">將接腳</text>
<rect x="1262.6" y="283.6" width="45.8" height="28.6" rx="3.6" fill="#4c97ff" stroke="#397bdc"/>
<text x="1272.8" y="304.0" font-size="15" font-weight="500" fill="#fff" text-anchor="start">3</text>
<path d="M1288.55 297.15 H1296.25 L1292.40 301.16 Z" fill="#fff" stroke="#fff" stroke-width="2.30" stroke-linejoin="round"/>
<text x="1316.4" y="303.7" font-size="13.5" font-weight="500" fill="#fff" text-anchor="start" textLength="28.6" lengthAdjust="spacing">設為</text>
<rect x="1352.2" y="276.4" width="271.9" height="43" rx="21.5" fill="#59c059" stroke="#389438"/>
<rect x="1356.4" y="280.4" width="171.3" height="35.4" rx="17.7" fill="#9966ff" stroke="#774dcb"/>
<text x="1367.4" y="303.7" font-size="13.5" font-weight="500" fill="#fff" text-anchor="start" textLength="86.2" lengthAdjust="spacing">讀取類比接腳</text>
<rect x="1461.6" y="283.6" width="54.8" height="28.6" rx="3.6" fill="#9966ff" stroke="#774dcb"/>
<text x="1470.7" y="304.0" font-size="15" font-weight="500" fill="#fff" text-anchor="start" textLength="17.9" lengthAdjust="spacing">A2</text>
<path d="M1497.15 297.15 H1504.85 L1501.00 301.16 Z" fill="#fff" stroke="#fff" stroke-width="2.30" stroke-linejoin="round"/>
<rect x="1535.5" y="283.6" width="41.6" height="28.6" rx="3.6" fill="#59c059" stroke="#389438"/>
<text x="1545.0" y="304.0" font-size="15" font-weight="500" fill="#fff" text-anchor="start">/</text>
<path d="M1557.35 297.15 H1565.05 L1561.20 301.16 Z" fill="#fff" stroke="#fff" stroke-width="2.30" stroke-linejoin="round"/>
<rect x="1585.4" y="284.1" width="34.6" height="27.8" rx="13.9" fill="#fff" stroke="#389438"/>
<text x="1603.1" y="304.0" font-size="15" font-weight="400" fill="#575e75" text-anchor="middle">4</text>
</svg>
<svg class="abs" style="left:1189px;top:89px" width="518" height="589" viewBox="1189 89 518 589">
<rect x="1699.2" y="268.5" width="5.6" height="304.5" rx="2.8" fill="#cecece"/>
<rect x="1319.2" y="671" width="278.6" height="5.9" rx="2.95" fill="#cecece"/>
<circle cx="1667" cy="471" r="17.2" fill="#fff" stroke="#d6d6d6" stroke-width="1.4"/>
<circle cx="1667" cy="515" r="17.2" fill="#fff" stroke="#d6d6d6" stroke-width="1.4"/>
<circle cx="1667" cy="559" r="17.2" fill="#fff" stroke="#d6d6d6" stroke-width="1.4"/>
<circle cx="1667" cy="471" r="7.4" fill="none" stroke="#6e7591" stroke-width="1.3"/>
<path d="M1672.3 476.3 L1675.8 479.8" stroke="#6e7591" stroke-width="1.5" fill="none"/>
<path d="M1664 471 H1670" stroke="#6e7591" stroke-width="1.6" fill="none"/>
<path d="M1667 468 V474" stroke="#6e7591" stroke-width="1.6" fill="none"/>
<circle cx="1667" cy="515" r="7.4" fill="none" stroke="#6e7591" stroke-width="1.3"/>
<path d="M1672.3 520.3 L1675.8 523.8" stroke="#6e7591" stroke-width="1.5" fill="none"/>
<path d="M1664 515 H1670" stroke="#6e7591" stroke-width="1.6" fill="none"/>
<rect x="1662.1" y="555" width="9.8" height="2" fill="#6e7591"/><rect x="1662.1" y="561" width="9.8" height="2" fill="#6e7591"/>
<path d="M1632 598 H1642.7 L1645.7 595 H1661.3 L1664.2 598 H1674 V604 H1632 Z" fill="#cccccc"/>
<path d="M1635 607 H1671 V645.5 Q1671 649 1667.5 649 H1638.5 Q1635 649 1635 645.5 Z" fill="#cccccc"/>
</svg>
<div class="abs" style="left:1706px;top:89px;width:1px;height:589px;background:#e6e9ee"></div><div class="abs" style="left:1707px;top:89px;width:1px;height:589px;background:#fbfbfc"></div>
<div class="vdiv" style="left:1188px;top:39px;height:639px;background:#d6dbe4"></div>
<div class="vdiv" style="left:1507px;top:39px;height:48px;background:#dde2ea"></div>
<!-- header controls -->
<div class="sel" style="left:944px;top:45px;width:238px;"><span class="abs" style="left:11px;top:0;line-height:32px;font-weight:400;color:#1a1a1a">圖塊</span><span class="abs ddarrow" style="left:212px;top:14px"></span></div>
<div class="sel" style="left:1514px;top:45px;width:188px;"><span class="abs" style="left:10px;top:0;line-height:33px;font-size:15px;letter-spacing:-0.18px;color:#3a444f;white-space:nowrap">1 (Arduino Uno R3)</span><span class="abs ddarrow" style="left:162px;top:14px"></span></div>
<div class="ibtn" style="left:1206px;border-color:#d9e0ec"></div>
<div class="ibtn" style="left:1252px"></div>
<div class="ibtn" style="left:1298px"></div>
<svg class="abs" style="left:1200px;top:45px" width="140" height="36" viewBox="1200 45 140 36">
  <path d="M1222.9 56.9 H1227.1 V62.8 H1230.2 L1225 69.2 L1219.8 62.8 H1222.9 Z" fill="#000"/>
  <rect x="1216" y="70" width="18" height="2" fill="#000"/>
  <g fill="#8d98a9">
    <path d="M1264.6 54.7 H1277.4 L1280 61.2 V70 Q1280 70.9 1279.1 70.9 H1262.9 Q1262 70.9 1262 70 V61.2 Z"/>
  </g>
  <path d="M1264.2 57 H1277.8 M1263.4 59.2 H1278.6" stroke="#f0f1f4" stroke-width="0.9" fill="none"/>
  <path d="M1262 61.4 H1280" stroke="#f0f1f4" stroke-width="0.7" fill="none"/>
  <rect x="1266.8" y="64" width="8.4" height="1.3" fill="#f0f1f4"/>
  <g fill="#8d98a9" stroke="#8d98a9">
    <ellipse cx="1317" cy="64.3" rx="4.6" ry="6.4" stroke="none"/>
    <ellipse cx="1317" cy="57.6" rx="2.6" ry="2.4" stroke="none"/>
    <path d="M1315.4 57 L1313.6 54.2 M1318.6 57 L1320.4 54.2" stroke-width="1" fill="none"/>
    <path d="M1313 61.5 L1310.6 60 L1309.4 58 M1321 61.5 L1323.4 60 L1324.6 58 M1312.6 64.6 H1308.8 M1321.4 64.6 H1325.2 M1313 67.4 L1310.8 69 L1310 71 M1321 67.4 L1323.2 69 L1324 71" stroke-width="1.2" fill="none"/>
  </g>
  <path d="M1317 66 V71" stroke="#f0f1f4" stroke-width="0.8"/>
</svg>
<!-- serial monitor -->
<div class="abs" style="left:938px;top:678px;width:770px;height:32px;background:#f0f1f4;border-top:1px solid #dde2ea;border-bottom:1px solid #dde2ea"></div>
<div class="abs" id="serial" style="left:938px;top:710px;width:770px;height:120px;background:#fff;border-bottom:1px solid #d5dbe5"></div>
<div class="abs" style="left:938px;top:830px;width:770px;height:3px;background:#f0f1f4"></div>
<svg class="abs" style="left:938px;top:679px" width="770" height="151" viewBox="938 679 770 151" font-family="'Liberation Sans','Noto Sans CJK TC',sans-serif">
<rect x="947.6" y="686.9" width="20.8" height="14.4" rx="1.2" fill="none" stroke="#000" stroke-width="1.5"/>
<rect x="947" y="686.2" width="22" height="3.6" fill="#000"/>
<rect x="949.3" y="687.3" width="1.5" height="1.2" fill="#f0f1f4"/>
<rect x="951.9" y="687.3" width="1.5" height="1.2" fill="#f0f1f4"/>
<rect x="954.5" y="687.3" width="1.5" height="1.2" fill="#f0f1f4"/>
<rect x="960.6" y="689" width="1.6" height="12" fill="#000"/>
<rect x="963.3" y="698.2" width="4.2" height="2" fill="none" stroke="#000" stroke-width="0.9"/>
<text x="978.6" y="698.2" font-size="14" font-weight="350" fill="#2c4059" textLength="68.6" lengthAdjust="spacing">串列監視器</text>
<path d="M1683.8 691.4 H1692.4 L1688.1 696 Z" fill="#000"/>
<text x="946.5" y="719.8" font-size="10.4" fill="#3d4f66" textLength="12.2" lengthAdjust="spacing">54</text>
<text x="946.5" y="733.8" font-size="10.4" fill="#3d4f66" textLength="12.2" lengthAdjust="spacing">54</text>
<text x="946.5" y="747.8" font-size="10.4" fill="#3d4f66" textLength="12.2" lengthAdjust="spacing">54</text>
<text x="946.5" y="761.8" font-size="10.4" fill="#3d4f66" textLength="12.2" lengthAdjust="spacing">54</text>
<text x="946.5" y="775.8" font-size="10.4" fill="#3d4f66" textLength="12.2" lengthAdjust="spacing">54</text>
<text x="946.5" y="789.8" font-size="10.4" fill="#3d4f66" textLength="12.2" lengthAdjust="spacing">54</text>
<text x="946.5" y="803.8" font-size="10.4" fill="#3d4f66" textLength="12.2" lengthAdjust="spacing">54</text>
<text x="946.5" y="817.8" font-size="10.4" fill="#3d4f66" textLength="12.2" lengthAdjust="spacing">54</text>
<rect x="1691" y="710" width="17" height="119" fill="#f1f1f1"/>
<path d="M1695.8 721 L1699.5 717.3 L1703.2 721 Z" fill="#505050"/>
<path d="M1695.8 818 L1699.5 821.7 L1703.2 818 Z" fill="#a3a3a3"/>
<rect x="1693" y="795" width="13" height="16.5" fill="#c1c1c1"/>
</svg>

</body>
</html>
